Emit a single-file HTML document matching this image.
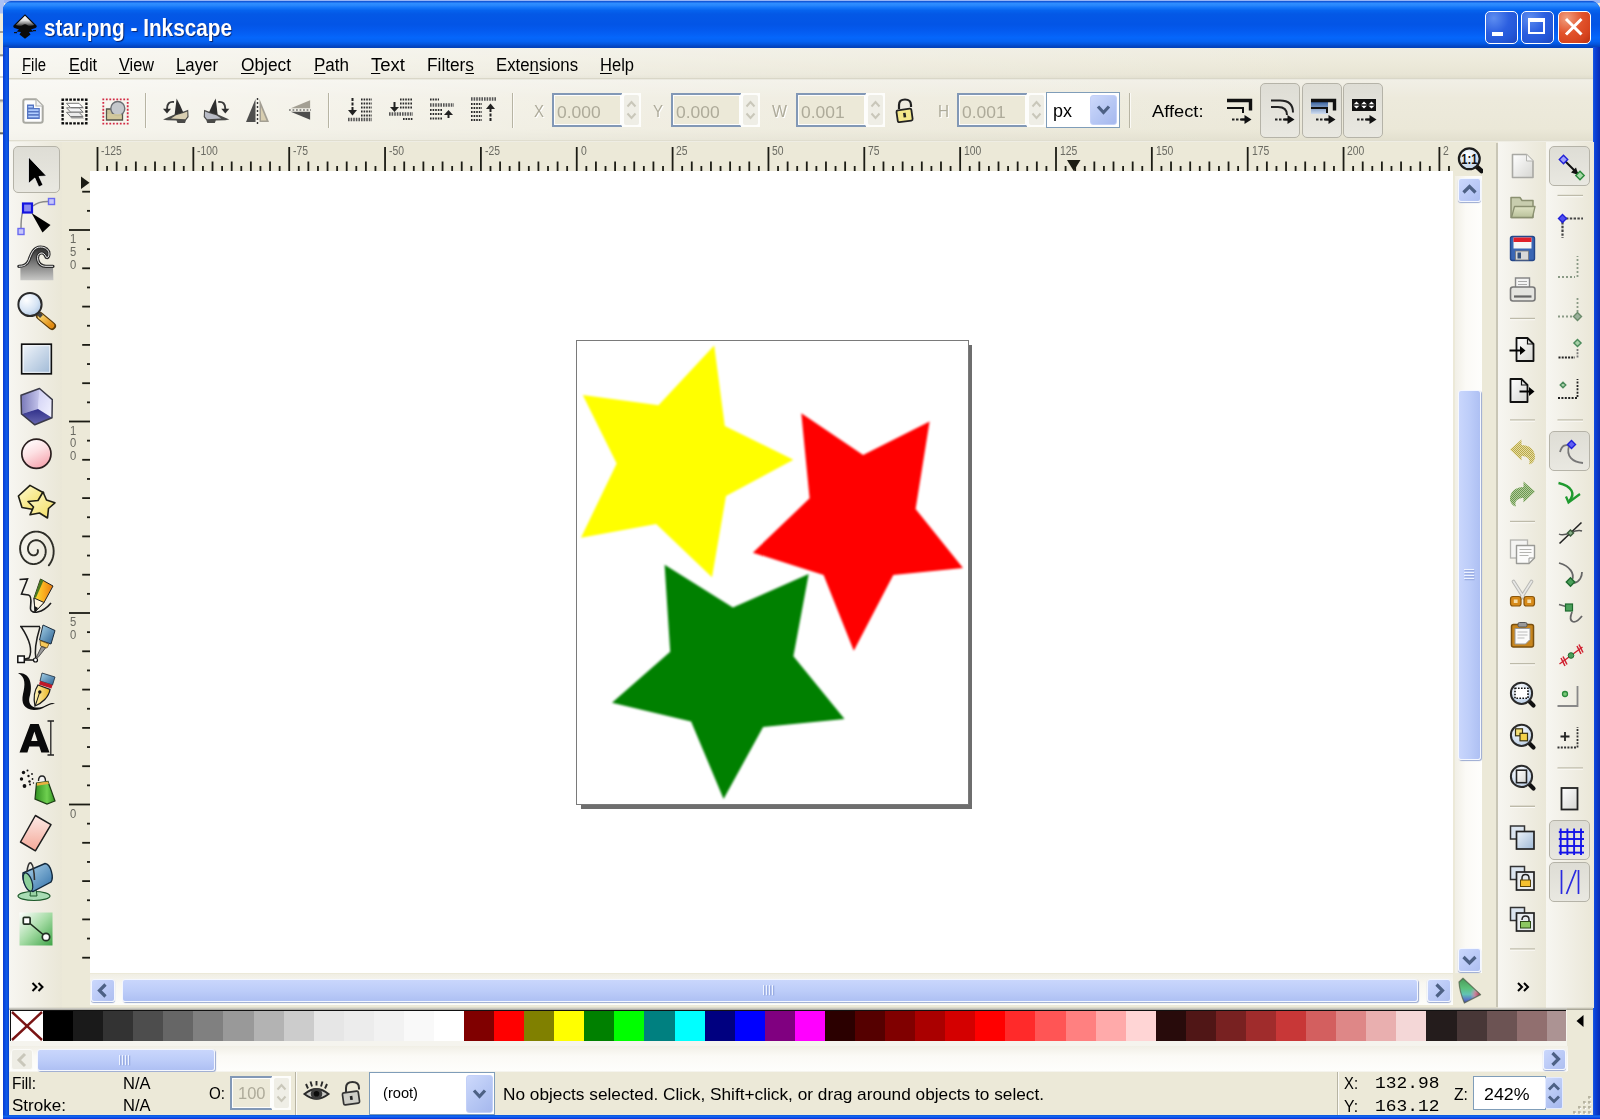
<!DOCTYPE html><html><head><meta charset="utf-8"><title>star.png - Inkscape</title><style>
*{box-sizing:border-box;margin:0;padding:0}
html,body{width:1600px;height:1119px;overflow:hidden;background:#ece9d8}
body{position:relative;font-family:"Liberation Sans","DejaVu Sans",sans-serif;font-size:16px;color:#000}
.a{position:absolute}
.t{position:absolute;white-space:nowrap;line-height:1}
svg{position:absolute;overflow:visible}
u{text-decoration:underline;text-underline-offset:2px;text-decoration-thickness:1px}
.sb{position:absolute;border:1px solid #fff;border-radius:3px;box-shadow:0 0 0 1px #b4c4ee inset}
.sep{position:absolute;background:#b9b6a5}
.spin{position:absolute;background:#fff;border:1px solid #9fb5d2}
.btn{position:absolute;border:1px solid #b5b3a8;border-radius:5px;background:linear-gradient(#deddd5,#e9e8e1)}
</style></head><body>
<div class="a" style="left:0;top:0;width:1600px;height:3px;background:#98b4f4"></div>
<div class="a" style="left:0;top:0;width:4px;height:1119px;background:linear-gradient(#a9c1f6 0,#a9c1f6 13px,#efecdc 14px,#efecdc 31px,#555 32px,#efecdc 33px,#efecdc 54px,#666 55px,#fff 57px,#fff 76px,#aaa 77px,#fff 78px,#fff 99px,#888 100px,#efecdc 103px,#efecdc 132px,#333 133px,#fff 135px,#fff 100%)"></div>
<div class="a" style="left:3px;top:1px;width:1597px;height:1118px;border-radius:9px 9px 0 0;background:#0a3fd6"></div>
<div class="a" style="left:3px;top:1px;width:1597px;height:47px;border-radius:9px 9px 0 0;background:linear-gradient(to bottom,#0a4bd0 0%,#2f8dff 5%,#2a88fd 9%,#1475f8 14%,#0663ee 20%,#0458e6 28%,#0355e6 50%,#045bf0 64%,#0566fb 78%,#0562f2 86%,#0454dc 92%,#0347c4 96%,#0340b6 100%)"></div>
<div class="a" style="left:3px;top:47px;width:6px;height:1072px;background:linear-gradient(to right,#0a3cd0 0,#0a4ae0 30%,#0f5ae8 60%,#0a4cdc 85%,#0840c4 100%)"></div>
<div class="a" style="left:1593px;top:47px;width:7px;height:1079px;background:linear-gradient(to right,#1a5ae4 0,#0c44d8 25%,#0a3acc 55%,#072cb4 100%)"></div>
<div class="a" style="left:3px;top:1115px;width:1597px;height:4px;background:linear-gradient(#0855dd,#1266f0 40%,#0831d9)"></div>
<div class="a" style="left:9px;top:48px;width:1584px;height:1067px;background:#ece9d8"></div>
<svg style="left:12px;top:13px" width="26" height="27" viewBox="0 0 26 27">
<defs><linearGradient id="ig" x1="0" y1="0" x2="0" y2="1"><stop offset="0" stop-color="#fff"/><stop offset=".45" stop-color="#e0e0e0"/><stop offset=".8" stop-color="#777"/><stop offset="1" stop-color="#222"/></linearGradient></defs>
<path d="M13 1.2 L1.5 12.5 Q0.5 14 2.5 15 L7 16.5 L4.5 18.5 L9 19 L7.5 21.5 L13 25.8 L18.5 21.5 L17 19 L21.5 18.5 L19 16.5 L23.5 15 Q25.5 14 24.5 12.5 Z" fill="#0a0a0a"/>
<path d="M13 2.800 L3.800 12 Q8 14 10.500 12.200 Q13 10.300 15.500 12.200 Q18 14 22.200 12 Z" fill="url(#ig)"/>
<rect x="2" y="19" width="3" height="1.2" fill="#111"/><rect x="21" y="17" width="3" height="1.2" fill="#111"/>
</svg>
<div class="t" style="left:44.00px;top:16.73px;font-size:23.00px;color:#fff;font-weight:bold;transform:scaleX(0.9024);transform-origin:0 0;text-shadow:1px 1px 1px #0a246a;">star.png - Inkscape</div>
<div class="a" style="left:1485px;top:11px;width:33px;height:33px;border:1.5px solid #fff;border-radius:5px;background:radial-gradient(circle at 25% 20%,#5d8df0 0,#2c5fe0 45%,#2458d8 70%,#1c46c0 100%)"><div class="a" style="left:6px;top:20px;width:11px;height:4px;background:#fff"></div></div>
<div class="a" style="left:1521px;top:11px;width:33px;height:33px;border:1.5px solid #fff;border-radius:5px;background:radial-gradient(circle at 25% 20%,#5d8df0 0,#2c5fe0 45%,#2458d8 70%,#1c46c0 100%)"><div class="a" style="left:6px;top:6px;width:17px;height:16px;border:2px solid #fff;border-top-width:4px"></div></div>
<div class="a" style="left:1558px;top:11px;width:33px;height:33px;border:1.5px solid #fff;border-radius:5px;background:radial-gradient(circle at 25% 20%,#f0a080 0,#e2532c 45%,#d6431e 75%,#b8300f 100%)"><svg style="left:0;top:0" width="30" height="30" viewBox="0 0 30 30"><path d="M7 7 L22.5 22.5 M22.5 7 L7 22.5" stroke="#fff" stroke-width="3" fill="none"/></svg></div>
<div class="a" style="left:9px;top:48px;width:1584px;height:31px;background:linear-gradient(to right,rgba(255,255,255,.6) 0,rgba(255,255,255,.25) 40%,rgba(255,255,255,0) 85%),linear-gradient(#efede2 0,#edeadb 45%,#e8e5d5 85%,#dfdccb 100%)"></div>
<div class="a" style="left:9px;top:78px;width:1584px;height:2px;background:linear-gradient(#d0cdbb,#f4f3ec)"></div>
<div class="t" style="left:22.00px;top:55.76px;font-size:18.00px;color:#000;transform:scaleX(0.8275);transform-origin:0 0;"><u>F</u>ile</div>
<div class="t" style="left:69.00px;top:55.76px;font-size:18.00px;color:#000;transform:scaleX(0.9028);transform-origin:0 0;"><u>E</u>dit</div>
<div class="t" style="left:119.00px;top:55.76px;font-size:18.00px;color:#000;transform:scaleX(0.9047);transform-origin:0 0;"><u>V</u>iew</div>
<div class="t" style="left:176.00px;top:55.76px;font-size:18.00px;color:#000;transform:scaleX(0.9329);transform-origin:0 0;"><u>L</u>ayer</div>
<div class="t" style="left:241.00px;top:55.76px;font-size:18.00px;color:#000;transform:scaleX(0.9612);transform-origin:0 0;"><u>O</u>bject</div>
<div class="t" style="left:314.00px;top:55.76px;font-size:18.00px;color:#000;transform:scaleX(0.9453);transform-origin:0 0;"><u>P</u>ath</div>
<div class="t" style="left:371.00px;top:55.76px;font-size:18.00px;color:#000;transform:scaleX(1.0300);transform-origin:0 0;"><u>T</u>ext</div>
<div class="t" style="left:427.00px;top:55.76px;font-size:18.00px;color:#000;transform:scaleX(0.9593);transform-origin:0 0;">Filter<u>s</u></div>
<div class="t" style="left:496.00px;top:55.76px;font-size:18.00px;color:#000;transform:scaleX(0.9313);transform-origin:0 0;">Exte<u>n</u>sions</div>
<div class="t" style="left:600.00px;top:55.76px;font-size:18.00px;color:#000;transform:scaleX(0.9185);transform-origin:0 0;"><u>H</u>elp</div>
<div class="a" style="left:9px;top:80px;width:1584px;height:61px;background:linear-gradient(to right,rgba(255,255,255,.6) 0,rgba(255,255,255,.25) 40%,rgba(255,255,255,0) 85%),linear-gradient(#f1efe6 0,#edeadc 30%,#ebe8d8 80%,#e2dfce 100%)"></div>
<div class="a" style="left:9px;top:140px;width:1584px;height:2px;background:linear-gradient(#d8d5c4,#f6f5ee)"></div>
<svg style="left:22.0px;top:98.0px" width="22.0" height="26.0" viewBox="0 0 22 26"><path d="M3.500 1.300 h10.500 l6.700 6.700 v14.500 q0 2.200 -2.200 2.200 h-15 q-2.200 0 -2.200 -2.200 v-19 q0 -2.200 2.200 -2.200z" fill="#fdfdfd" stroke="#a9a9a2" stroke-width="2" stroke-linejoin="round"/>
<path d="M14 1.500 v6.500 h6.500" fill="#f4f4f4" stroke="#b8b8b2" stroke-width="1.200"/>
<path d="M5 6.600 h7 v3.400 h5.800 v11 h-12.800z" fill="#5575c2"/>
<g fill="#b4d0ff"><rect x="6.300" y="8" width="4.500" height="1.500"/><rect x="6.300" y="11.300" width="10.300" height="1.600"/><rect x="6.300" y="14.500" width="10.300" height="1.600"/><rect x="6.300" y="17.700" width="10.300" height="1.600"/></g></svg>
<svg style="left:61.0px;top:97.5px" width="27.0" height="27.0" viewBox="0 0 27 27"><path d="M0.500 1.600 H26.500 M25.400 0.500 V26.500 M26.500 25.400 H0.500 M1.600 26.500 V0.500" fill="none" stroke="#0c0c0c" stroke-width="2.300" stroke-dasharray="2.600 1.300"/><path d="M8 17.500 h12.500 l2.500 3 h-12.500z" fill="#9a9a9a"/><path d="M5.500 14.3 h12.500 l4 4.200 h-12.500z" fill="#ececec" stroke="#7a7a7a" stroke-width="1"/><path d="M8 12 h12.500 l2.500 3 h-12.500z" fill="#a8a8a8"/><path d="M5.500 9.8 h12.500 l4 4.200 h-12.500z" fill="#f4f4f4" stroke="#7a7a7a" stroke-width="1"/><path d="M8 7.500 h12.500 l2.500 3 h-12.500z" fill="#b4b4b4"/><path d="M5.500 5.3 h12.500 l4 4.200 h-12.500z" fill="#ffffff" stroke="#7a7a7a" stroke-width="1"/></svg>
<svg style="left:102.0px;top:97.5px" width="27.0" height="27.0" viewBox="0 0 27 27"><path d="M0.400 1.300 H26.600 M25.700 0.400 V26.600 M26.600 25.700 H0.400 M1.300 26.600 V0.400" fill="none" stroke="#d22a44" stroke-width="1.800" stroke-dasharray="1.800 1.685"/>
<path d="M4.500 11 h6 v4 h10 v7 h-16z" fill="#c9c29a" stroke="#55554a" stroke-width="1.300"/><circle cx="15.800" cy="10.500" r="7" fill="#c4c8cc" stroke="#6a6e72" stroke-width="1.400"/><path d="M5.500 16 h14 v5 h-14z" fill="#d3ca9c" opacity=".9"/></svg>
<div class="sep" style="left:145px;top:93px;width:2px;height:35px;background:linear-gradient(to right,#b7b4a3 50%,#fbfaf6 50%)"></div>
<svg style="left:0;top:0" width="1600" height="1119" viewBox="0 0 1600 1119"><polygon points="163.0,119.6 175.0,114.3 183.0,111.8 188.2,109.8 188.6,117.0 186.0,120.3 185.0,123.0 177.5,123.0 176.5,120.6 167.0,120.2" fill="#4a4a48"/><polygon points="171.0,118.6 176.0,115.3 183.5,113.0 187.3,111.5 187.4,116.6 185.3,119.2" fill="#d9cfb2"/><polygon points="176.6,98.6 174.6,115.0 183.2,112.2 180.0,105.0" fill="#2e2e2e"/><path d="M174.0 102 Q167.0 101 167.0 109" fill="none" stroke="#3a3a3a" stroke-width="1.900"/><polygon points="163.0,108.8 171.0,108.8 167.0,113.6" fill="#2e2e2e"/><polygon points="229.3,119.6 217.3,114.3 209.3,111.8 204.1,109.8 203.7,117.0 206.3,120.3 207.3,123.0 214.8,123.0 215.8,120.6 225.3,120.2" fill="#4a4a48"/><polygon points="221.3,118.6 216.3,115.3 208.8,113.0 205.0,111.5 204.9,116.6 207.0,119.2" fill="#b9bcc6"/><polygon points="215.7,98.6 217.7,115.0 209.1,112.2 212.3,105.0" fill="#2e2e2e"/><path d="M218.3 102 Q225.3 101 225.3 109" fill="none" stroke="#3a3a3a" stroke-width="1.900"/><polygon points="229.3,108.8 221.3,108.8 225.3,113.6" fill="#2e2e2e"/></svg>
<svg style="left:245.0px;top:98.0px" width="25.0" height="26.0" viewBox="0 0 25 26"><path d="M10.500 1 L10.500 24 L1 24 Z" fill="#3c3c3c" opacity=".9"/><path d="M14.500 1 L14.500 24 L24 24 Z" fill="#9a968a" opacity=".9"/><path d="M16 9 L16 22.500 L21.500 22.500z" fill="#d8ceb0"/><path d="M12.500 0 v26" stroke="#333" stroke-width="1.4" stroke-dasharray="2 2"/></svg>
<svg style="left:288.5px;top:98.0px" width="22.0" height="24.0" viewBox="0 0 25 26"><path d="M24 2 L24 11 L2 11 Z" fill="#9a968a" opacity=".9"/><path d="M24 24 L24 15 L2 15 Z" fill="#3c3c3c" opacity=".9"/><path d="M0 13 h25" stroke="#333" stroke-width="1.4" stroke-dasharray="2 2"/></svg>
<div class="sep" style="left:328px;top:93px;width:2px;height:35px;background:linear-gradient(to right,#b7b4a3 50%,#fbfaf6 50%)"></div>
<svg style="left:347.0px;top:97.0px" width="26.0" height="26.0" viewBox="0 0 26 26"><path d="M5.500 1 v14" stroke="#222" stroke-width="2" stroke-dasharray="3 1.500"/><path d="M1 13 h9 l-4.500 5.500z" fill="#222"/><path d="M14 2.5 h11" stroke="#2a2a2a" stroke-width="2.2" stroke-dasharray="1.6 1"/><path d="M14 6.5 h11" stroke="#2a2a2a" stroke-width="2.2" stroke-dasharray="1.6 1"/><path d="M14 10.5 h11" stroke="#2a2a2a" stroke-width="2.2" stroke-dasharray="1.6 1"/><path d="M14 14.5 h11" stroke="#2a2a2a" stroke-width="2.2" stroke-dasharray="1.6 1"/><path d="M14 18.5 h11" stroke="#2a2a2a" stroke-width="2.2" stroke-dasharray="1.6 1"/><path d="M1 22.500 h24" stroke="#555" stroke-width="3.6" stroke-dasharray="1.600 1"/></svg>
<svg style="left:388.0px;top:97.0px" width="26.0" height="26.0" viewBox="0 0 26 26"><path d="M6.500 5 v6" stroke="#222" stroke-width="2" /><path d="M2 10 h9 l-4.500 5z" fill="#222"/><path d="M12 2.5 h13" stroke="#2a2a2a" stroke-width="2.2" stroke-dasharray="1.6 1"/><path d="M12 6.5 h13" stroke="#2a2a2a" stroke-width="2.2" stroke-dasharray="1.6 1"/><path d="M12 10.5 h13" stroke="#2a2a2a" stroke-width="2.2" stroke-dasharray="1.6 1"/><path d="M1 17 h24" stroke="#555" stroke-width="3.6" stroke-dasharray="1.600 1"/><path d="M15 22 h10" stroke="#2a2a2a" stroke-width="2.2" stroke-dasharray="1.6 1"/></svg>
<svg style="left:429.0px;top:97.0px" width="26.0" height="26.0" viewBox="0 0 26 26"><path d="M1 2.5 h9" stroke="#2a2a2a" stroke-width="2.2" stroke-dasharray="1.6 1"/><path d="M1 8 h24" stroke="#555" stroke-width="3.6" stroke-dasharray="1.600 1"/><path d="M1 13 h12" stroke="#2a2a2a" stroke-width="2.2" stroke-dasharray="1.6 1"/><path d="M1 17 h12" stroke="#2a2a2a" stroke-width="2.2" stroke-dasharray="1.6 1"/><path d="M1 21.5 h12" stroke="#2a2a2a" stroke-width="2.2" stroke-dasharray="1.6 1"/><path d="M19.500 21 v-4" stroke="#222" stroke-width="2"/><path d="M15 18 h9 l-4.500 -5z" fill="#222"/></svg>
<svg style="left:470.0px;top:96.0px" width="26.0" height="26.0" viewBox="0 0 26 26"><path d="M1 3 h25" stroke="#555" stroke-width="3.600" stroke-dasharray="1.600 1"/><path d="M1 8 h11" stroke="#2a2a2a" stroke-width="2.2" stroke-dasharray="1.6 1"/><path d="M1 12 h11" stroke="#2a2a2a" stroke-width="2.2" stroke-dasharray="1.6 1"/><path d="M1 16 h11" stroke="#2a2a2a" stroke-width="2.2" stroke-dasharray="1.6 1"/><path d="M1 20 h11" stroke="#2a2a2a" stroke-width="2.2" stroke-dasharray="1.6 1"/><path d="M1 24 h11" stroke="#2a2a2a" stroke-width="2.2" stroke-dasharray="1.6 1"/><path d="M20.500 25 v-14" stroke="#222" stroke-width="2" stroke-dasharray="3 1.500"/><path d="M16 13 h9 l-4.500 -5.500z" fill="#222"/></svg>
<div class="sep" style="left:512px;top:93px;width:2px;height:35px;background:linear-gradient(to right,#b7b4a3 50%,#fbfaf6 50%)"></div>
<div class="t" style="left:534.00px;top:103.33px;font-size:16.50px;color:#aeab9a;transform:scaleX(0.9086);transform-origin:0 0;text-shadow:1px 1px 0 #fff;">X</div>
<div class="a" style="left:552px;top:93px;width:71px;height:34px;border:2px solid #8298b6;border-right-color:#fdfdfc;background:#ece9d8;box-shadow:inset 0 0 0 1px #fdfdfc"></div><div class="t" style="left:557.00px;top:103.59px;font-size:16.20px;color:#aeab9a;transform:scaleX(1.0781);transform-origin:0 0;">0.000</div>
<div class="a" style="left:622px;top:93px;width:19px;height:34px;background:#fdfdfb"></div><div class="a" style="left:624px;top:95px;width:15px;height:30px;background:#efeee6;border-radius:2px"></div><svg style="left:624.0px;top:95.0px" width="15.0" height="30.0" viewBox="0 0 15 30"><path d="M3.5 11.5 l4 -4.5 l4 4.5 M3.5 18.5 l4 4.5 l4 -4.5" fill="none" stroke="#c9c7ba" stroke-width="2"/></svg>
<div class="t" style="left:653.00px;top:103.33px;font-size:16.50px;color:#aeab9a;transform:scaleX(0.9086);transform-origin:0 0;text-shadow:1px 1px 0 #fff;">Y</div>
<div class="a" style="left:671px;top:93px;width:71px;height:34px;border:2px solid #8298b6;border-right-color:#fdfdfc;background:#ece9d8;box-shadow:inset 0 0 0 1px #fdfdfc"></div><div class="t" style="left:676.00px;top:103.59px;font-size:16.20px;color:#aeab9a;transform:scaleX(1.0781);transform-origin:0 0;">0.000</div>
<div class="a" style="left:741px;top:93px;width:19px;height:34px;background:#fdfdfb"></div><div class="a" style="left:743px;top:95px;width:15px;height:30px;background:#efeee6;border-radius:2px"></div><svg style="left:743.0px;top:95.0px" width="15.0" height="30.0" viewBox="0 0 15 30"><path d="M3.5 11.5 l4 -4.5 l4 4.5 M3.5 18.5 l4 4.5 l4 -4.5" fill="none" stroke="#c9c7ba" stroke-width="2"/></svg>
<div class="t" style="left:772.00px;top:103.33px;font-size:16.50px;color:#aeab9a;transform:scaleX(0.9631);transform-origin:0 0;text-shadow:1px 1px 0 #fff;">W</div>
<div class="a" style="left:796px;top:93px;width:71px;height:34px;border:2px solid #8298b6;border-right-color:#fdfdfc;background:#ece9d8;box-shadow:inset 0 0 0 1px #fdfdfc"></div><div class="t" style="left:801.00px;top:103.59px;font-size:16.20px;color:#aeab9a;transform:scaleX(1.0781);transform-origin:0 0;">0.001</div>
<div class="a" style="left:866px;top:93px;width:19px;height:34px;background:#fdfdfb"></div><div class="a" style="left:868px;top:95px;width:15px;height:30px;background:#efeee6;border-radius:2px"></div><svg style="left:868.0px;top:95.0px" width="15.0" height="30.0" viewBox="0 0 15 30"><path d="M3.5 11.5 l4 -4.5 l4 4.5 M3.5 18.5 l4 4.5 l4 -4.5" fill="none" stroke="#c9c7ba" stroke-width="2"/></svg>
<svg style="left:894.0px;top:98.0px" width="22.0" height="26.0" viewBox="0 0 22 26"><path d="M5 11 v-4 q0 -5.500 6 -5.500 q6 0 6 5.500 v2" fill="none" stroke="#222" stroke-width="2.200"/>
<rect x="3" y="11.500" width="15" height="12" rx="1.500" transform="rotate(-8 10 17)" fill="#f4e88a" stroke="#222" stroke-width="1.800"/><rect x="9.300" y="15" width="2.600" height="4.500" fill="#222" transform="rotate(-8 10 17)"/></svg>
<div class="t" style="left:938.00px;top:103.33px;font-size:16.50px;color:#aeab9a;transform:scaleX(0.9231);transform-origin:0 0;text-shadow:1px 1px 0 #fff;">H</div>
<div class="a" style="left:957px;top:93px;width:71px;height:34px;border:2px solid #8298b6;border-right-color:#fdfdfc;background:#ece9d8;box-shadow:inset 0 0 0 1px #fdfdfc"></div><div class="t" style="left:962.00px;top:103.59px;font-size:16.20px;color:#aeab9a;transform:scaleX(1.0781);transform-origin:0 0;">0.001</div>
<div class="a" style="left:1027px;top:93px;width:19px;height:34px;background:#fdfdfb"></div><div class="a" style="left:1029px;top:95px;width:15px;height:30px;background:#efeee6;border-radius:2px"></div><svg style="left:1029.0px;top:95.0px" width="15.0" height="30.0" viewBox="0 0 15 30"><path d="M3.5 11.5 l4 -4.5 l4 4.5 M3.5 18.5 l4 4.5 l4 -4.5" fill="none" stroke="#c9c7ba" stroke-width="2"/></svg>
<div class="a" style="left:1046px;top:92px;width:74px;height:36px;background:#fff;border:1.5px solid #7f9db9"></div>
<div class="a" style="left:1090px;top:95px;width:27px;height:30px;border-radius:3px;background:linear-gradient(135deg,#cdd9fb,#b4c5f3 60%,#a6b8ee);border:1px solid #c3d0f8"></div>
<svg style="left:1090.0px;top:95.0px" width="27.0" height="30.0" viewBox="0 0 27 30"><path d="M8 11.500 l5.500 6 l5.500 -6" fill="none" stroke="#4d6185" stroke-width="3.200"/></svg>
<div class="t" style="left:1053.00px;top:102.26px;font-size:18.00px;color:#000;transform:scaleX(0.9995);transform-origin:0 0;">px</div>
<div class="sep" style="left:1129px;top:93px;width:2px;height:35px;background:linear-gradient(to right,#b7b4a3 50%,#fbfaf6 50%)"></div>
<div class="t" style="left:1151.70px;top:103.03px;font-size:16.50px;color:#000;transform:scaleX(1.1083);transform-origin:0 0;">Affect:</div>
<div class="btn" style="left:1260px;top:83px;width:40px;height:55px"></div>
<div class="btn" style="left:1302px;top:83px;width:40px;height:55px"></div>
<div class="btn" style="left:1343px;top:83px;width:40px;height:55px"></div>
<svg style="left:1226.0px;top:98.0px" width="26.0" height="26.0" viewBox="0 0 26 26"><path d="M1 2.500 h23.500 v10" fill="none" stroke="#111" stroke-width="3.400"/><path d="M1 10 h16 v5" fill="none" stroke="#111" stroke-width="2"/><path d="M6 21.500 h10" stroke="#222" stroke-width="2" stroke-dasharray="2.500 1.500"/><path d="M15.500 21.500 h5" stroke="#111" stroke-width="2.400"/><path d="M18.500 17 l7 4.500 l-7 4.500z" fill="#111"/></svg>
<svg style="left:1269.0px;top:98.0px" width="26.0" height="26.0" viewBox="0 0 26 26"><path d="M2 2.500 h9 q13 0 13 12" fill="none" stroke="#222" stroke-width="2"/><path d="M2 9 h7 q9 0 9 8" fill="none" stroke="#222" stroke-width="2"/><path d="M6 21.500 h10" stroke="#222" stroke-width="2" stroke-dasharray="2.500 1.500"/><path d="M15.500 21.500 h5" stroke="#111" stroke-width="2.400"/><path d="M18.500 17 l7 4.500 l-7 4.500z" fill="#111"/></svg>
<svg style="left:1310.0px;top:98.0px" width="26.0" height="26.0" viewBox="0 0 26 26"><defs><linearGradient id="afg" x1="0" y1="0" x2="0" y2="1"><stop offset="0" stop-color="#3b64a0"/><stop offset="1" stop-color="#cfdcef"/></linearGradient></defs><rect x="1" y="4" width="17" height="12" fill="url(#afg)"/><path d="M1 2.500 h23.500 v10" fill="none" stroke="#111" stroke-width="3.400"/><path d="M1 10 h16 v5" fill="none" stroke="#111" stroke-width="2"/><path d="M6 21.500 h10" stroke="#222" stroke-width="2" stroke-dasharray="2.500 1.500"/><path d="M15.500 21.500 h5" stroke="#111" stroke-width="2.400"/><path d="M18.500 17 l7 4.500 l-7 4.500z" fill="#111"/></svg>
<svg style="left:1351.0px;top:98.0px" width="26.0" height="26.0" viewBox="0 0 26 26"><rect x="1" y="1" width="24" height="12" fill="#111"/><path d="M2 7 l3.500 -3.500 l3.500 3.500 l-3.500 3.500z M9.500 7 l3.500 -3.500 l3.500 3.500 l-3.500 3.500z M17 7 l3.500 -3.500 l3.500 3.500 l-3.500 3.500z" fill="#fff"/><path d="M1 7 h24" stroke="#111" stroke-width="1.500"/><path d="M6 21.500 h10" stroke="#222" stroke-width="2" stroke-dasharray="2.500 1.500"/><path d="M15.500 21.500 h5" stroke="#111" stroke-width="2.400"/><path d="M18.500 17 l7 4.500 l-7 4.500z" fill="#111"/></svg>
<div class="a" style="left:9px;top:142px;width:53px;height:866px;background:linear-gradient(to right,#f7f6f1 0,#f1efe6 45%,#eae7d7 100%)"></div>
<div class="btn" style="left:13px;top:146px;width:47px;height:47px"></div>
<svg style="left:0;top:0" width="1600" height="1119" viewBox="0 0 1600 1119"><defs>
<linearGradient id="g_tw" x1="0" y1="0" x2="0" y2="1"><stop offset="0" stop-color="#2a2a2a"/><stop offset=".5" stop-color="#7c7c7c"/><stop offset="1" stop-color="#c8c8c6"/></linearGradient>
<radialGradient id="g_lens" cx=".35" cy=".3" r=".8"><stop offset="0" stop-color="#fff"/><stop offset=".6" stop-color="#d6e4f4"/><stop offset="1" stop-color="#a9c3e2"/></radialGradient>
<linearGradient id="g_hand" x1="0" y1="0" x2="1" y2="1"><stop offset="0" stop-color="#f9d26a"/><stop offset="1" stop-color="#e08a10"/></linearGradient>
<linearGradient id="g_rect" x1="0" y1="0" x2="1" y2="1"><stop offset="0" stop-color="#f2f6fb"/><stop offset="1" stop-color="#9fb9d6"/></linearGradient>
<linearGradient id="g_bxl" x1="0" y1="0" x2="1" y2="0"><stop offset="0" stop-color="#7878b8"/><stop offset="1" stop-color="#c6c6ec"/></linearGradient>
<linearGradient id="g_bxr" x1="0" y1="0" x2="1" y2="1"><stop offset="0" stop-color="#cfcff4"/><stop offset="1" stop-color="#f4f4ff"/></linearGradient>
<linearGradient id="g_bxb" x1="0" y1="0" x2="0" y2="1"><stop offset="0" stop-color="#30308a"/><stop offset="1" stop-color="#6868b0"/></linearGradient>
<linearGradient id="g_ell" x1=".2" y1="0" x2=".7" y2="1"><stop offset="0" stop-color="#fff"/><stop offset=".45" stop-color="#fde0e3"/><stop offset="1" stop-color="#f6a3ad"/></linearGradient>
<linearGradient id="g_star" x1="0" y1="0" x2="1" y2="1"><stop offset="0" stop-color="#fffbd0"/><stop offset="1" stop-color="#f2dc5a"/></linearGradient>
<linearGradient id="g_pcl" x1="0" y1="0" x2="1" y2="0"><stop offset="0" stop-color="#f8e23a"/><stop offset=".5" stop-color="#fbb020"/><stop offset="1" stop-color="#e87a10"/></linearGradient>
<linearGradient id="g_pen" x1="0" y1="0" x2="1" y2="1"><stop offset="0" stop-color="#a8d4ea"/><stop offset="1" stop-color="#2a5f90"/></linearGradient>
<linearGradient id="g_nib" x1="0" y1="0" x2="1" y2="0"><stop offset="0" stop-color="#fff6c0"/><stop offset="1" stop-color="#e9b520"/></linearGradient>
<linearGradient id="g_spr" x1="0" y1="0" x2="1" y2="0"><stop offset="0" stop-color="#2f8f1f"/><stop offset=".6" stop-color="#6fd050"/><stop offset="1" stop-color="#2f8f1f"/></linearGradient>
<linearGradient id="g_era" x1="0" y1="0" x2="0" y2="1"><stop offset="0" stop-color="#fdeae6"/><stop offset="1" stop-color="#f4a898"/></linearGradient>
<linearGradient id="g_bkt" x1="0" y1="0" x2="1" y2="1"><stop offset="0" stop-color="#b4d8ee"/><stop offset="1" stop-color="#2f6fa8"/></linearGradient>
<linearGradient id="g_grd" x1="0" y1="0" x2="1" y2="1"><stop offset="0" stop-color="#ffffff"/><stop offset=".5" stop-color="#a4dba4"/><stop offset="1" stop-color="#3fa447"/></linearGradient>
</defs><path d="M28.500 157 L28.500 183.500 L34.800 178 L38.800 187 L43 185 L39 176.500 L46.500 176 Z" fill="#000" stroke="#fff" stroke-width="1" stroke-opacity=".7"/><path d="M21 229 Q21 207 27 207 M33 206 Q38 201.500 48 201.500" fill="none" stroke="#8a8a8a" stroke-width="1.500"/><rect x="23" y="203.500" width="9" height="9" fill="#8a8af0" stroke="#1414e0" stroke-width="2.200"/><rect x="48.500" y="198.500" width="6" height="6" fill="#c6c6fa" stroke="#6a6af0" stroke-width="1.400"/><rect x="18" y="228.500" width="6" height="6" fill="#c6c6fa" stroke="#6a6af0" stroke-width="1.400"/><path d="M31.500 213 L50.500 225 L42.500 232.500 Z" fill="#000"/><path d="M18.800 266.300 C24 266.300 27 265 29 260 C31.500 253 34 247 40.500 247 C45.500 247 49 250 49 254 C49 257 47.500 258 46.300 257.300 C45 254 43 252.800 41 253 C38 253.500 37 257 37.800 260 C39 264.500 42 266.300 46 266.300 L53 266.300 L53.400 280.200 L20.400 280.200 L20.400 267 Z" fill="url(#g_tw)"/><path d="M18.800 266.300 C24 266.300 27 265 29 260 C31.500 253 34 247 40.500 247 C45.500 247 49 250 49 254 C49 257 47.500 258 46.300 257.300 C45 254 43 252.800 41 253 C38 253.500 37 257 37.800 260 C39 264.500 42 266.300 46 266.300 L53 266.300" fill="none" stroke="#2c2c2c" stroke-width="3.200" stroke-linecap="round"/><path d="M18.800 266.300 C24 266.300 27 265 29 260 C31.500 253 34 247 40.500 247 C45.500 247 49 250 49 254 C49 257 47.500 258 46.300 257.300 C45 254 43 252.800 41 253 C38 253.500 37 257 37.800 260 C39 264.500 42 266.300 46 266.300 L53 266.300" fill="none" stroke="#f0f0f0" stroke-width="1"/><path d="M40 316 L52 326" stroke="#5a3a08" stroke-width="8" stroke-linecap="round"/><path d="M40.500 316.500 L51.500 325.500" stroke="url(#g_hand)" stroke-width="5.600" stroke-linecap="round"/><path d="M37.500 312.500 L41.500 316.500" stroke="#444" stroke-width="4"/><circle cx="30" cy="304.500" r="11.600" fill="url(#g_lens)" stroke="#2a2a2a" stroke-width="2"/><rect x="21.700" y="344.200" width="29.600" height="29.600" fill="url(#g_rect)" stroke="#111" stroke-width="1.700"/><rect x="23.200" y="345.700" width="26.600" height="26.600" fill="none" stroke="#fff" stroke-width="1" opacity=".8"/><path d="M39.500 388.500 L52.300 399.600 L52 417.700 L34.800 424.800 L21.500 414 L21 395.300 Z" fill="#d8d8f6"/><path d="M21 395.300 L39.500 388.500 L38 409 L21.500 414 Z" fill="url(#g_bxl)"/><path d="M39.500 388.500 L52.300 399.600 L52 417.700 L38 409 Z" fill="url(#g_bxr)"/><path d="M38 409 L52 417.700 L34.800 424.800 L21.500 414 Z" fill="url(#g_bxb)"/><path d="M39.500 388.500 L52.300 399.600 L52 417.700 L34.800 424.800 L21.500 414 L21 395.300 Z" fill="none" stroke="#3a3a48" stroke-width="1.500" stroke-linejoin="round"/><circle cx="36.400" cy="453.800" r="14.600" fill="url(#g_ell)" stroke="#2a1e1e" stroke-width="1.700"/><path d="M30 485.400 L43.500 492.800 L33.400 509.500 L22 507.500 L18.400 496 Z" fill="url(#g_star)" stroke="#1e1e14" stroke-width="1.600" stroke-linejoin="round"/><path d="M43 492 L46.500 500 L54.900 502.800 L48.500 508.500 L47.500 518 L39.500 513 L30 514.800 L33.500 507 L28 501.500 L38 500.500 Z" fill="url(#g_star)" stroke="#1e1e14" stroke-width="1.600" stroke-linejoin="round"/><path d="M37.7 550.0 L37.8 550.2 L37.8 550.3 L37.9 550.5 L37.9 550.7 L37.9 550.9 L37.9 551.1 L37.9 551.3 L37.9 551.5 L37.9 551.7 L37.9 551.9 L37.9 552.1 L37.8 552.3 L37.7 552.5 L37.7 552.7 L37.6 553.0 L37.5 553.2 L37.4 553.4 L37.2 553.6 L37.1 553.7 L37.0 553.9 L36.8 554.1 L36.6 554.3 L36.4 554.4 L36.3 554.6 L36.1 554.7 L35.8 554.9 L35.6 555.0 L35.4 555.1 L35.1 555.2 L34.9 555.3 L34.6 555.3 L34.4 555.4 L34.1 555.4 L33.8 555.4 L33.6 555.4 L33.3 555.4 L33.0 555.4 L32.7 555.3 L32.5 555.3 L32.2 555.2 L31.9 555.1 L31.6 555.0 L31.3 554.8 L31.1 554.7 L30.8 554.5 L30.6 554.3 L30.3 554.1 L30.1 553.9 L29.8 553.6 L29.6 553.4 L29.4 553.1 L29.2 552.8 L29.0 552.5 L28.8 552.2 L28.7 551.8 L28.5 551.5 L28.4 551.1 L28.3 550.8 L28.2 550.4 L28.1 550.0 L28.1 549.6 L28.0 549.2 L28.0 548.8 L28.0 548.4 L28.0 548.0 L28.1 547.6 L28.1 547.1 L28.2 546.7 L28.3 546.3 L28.5 545.9 L28.6 545.5 L28.8 545.1 L29.0 544.7 L29.2 544.3 L29.4 544.0 L29.7 543.6 L29.9 543.2 L30.2 542.9 L30.5 542.6 L30.8 542.3 L31.2 542.0 L31.5 541.7 L31.9 541.5 L32.3 541.2 L32.7 541.0 L33.1 540.9 L33.6 540.7 L34.0 540.6 L34.4 540.4 L34.9 540.4 L35.4 540.3 L35.8 540.3 L36.3 540.3 L36.8 540.3 L37.3 540.3 L37.7 540.4 L38.2 540.5 L38.7 540.7 L39.2 540.8 L39.6 541.0 L40.1 541.2 L40.5 541.5 L41.0 541.8 L41.4 542.1 L41.8 542.4 L42.2 542.8 L42.6 543.2 L43.0 543.6 L43.3 544.0 L43.6 544.4 L44.0 544.9 L44.2 545.4 L44.5 545.9 L44.8 546.5 L45.0 547.0 L45.2 547.6 L45.3 548.2 L45.5 548.8 L45.6 549.4 L45.7 550.0 L45.7 550.6 L45.7 551.3 L45.7 551.9 L45.7 552.5 L45.6 553.2 L45.5 553.8 L45.4 554.4 L45.2 555.0 L45.0 555.7 L44.8 556.3 L44.5 556.9 L44.2 557.5 L43.9 558.0 L43.6 558.6 L43.2 559.1 L42.8 559.7 L42.4 560.2 L41.9 560.6 L41.4 561.1 L40.9 561.5 L40.4 561.9 L39.9 562.3 L39.3 562.6 L38.7 562.9 L38.1 563.2 L37.5 563.4 L36.9 563.6 L36.2 563.8 L35.6 563.9 L34.9 564.0 L34.2 564.1 L33.6 564.1 L32.9 564.1 L32.2 564.0 L31.5 563.9 L30.8 563.7 L30.2 563.6 L29.5 563.3 L28.8 563.1 L28.2 562.8 L27.6 562.4 L26.9 562.1 L26.3 561.6 L25.8 561.2 L25.2 560.7 L24.6 560.2 L24.1 559.6 L23.6 559.0 L23.2 558.4 L22.7 557.7 L22.3 557.1 L21.9 556.4 L21.6 555.6 L21.3 554.9 L21.0 554.1 L20.7 553.3 L20.5 552.5 L20.4 551.7 L20.3 550.8 L20.2 550.0 L20.1 549.1 L20.1 548.3 L20.2 547.4 L20.2 546.6 L20.3 545.7 L20.5 544.9 L20.7 544.0 L21.0 543.2 L21.2 542.3 L21.6 541.5 L21.9 540.7 L22.3 540.0 L22.8 539.2 L23.3 538.5 L23.8 537.8 L24.3 537.1 L24.9 536.4 L25.5 535.8 L26.2 535.2 L26.9 534.7 L27.6 534.2 L28.3 533.7 L29.1 533.3 L29.9 532.9 L30.7 532.6 L31.5 532.3 L32.3 532.0 L33.2 531.9 L34.0 531.7 L34.9 531.6 L35.8 531.6 L36.7 531.6 L37.5 531.6 L38.4 531.7 L39.3 531.9 L40.2 532.1 L41.1 532.3 L41.9 532.7 L42.8 533.0 L43.6 533.4 L44.4 533.9 L45.2 534.4 L46.0 535.0 L46.7 535.6 L47.4 536.2 L48.1 536.9 L48.8 537.6 L49.4 538.4 L50.0 539.2 L50.5 540.1 L51.0 541.0 L51.5 541.9 L51.9 542.8 L52.3 543.8 L52.7 544.8 L52.9 545.8 L53.2 546.8 L53.4 547.9 L53.5 548.9 L53.6 550.0 L53.7 551.1 L53.6 552.2 L53.6 553.3 L53.5 554.3 L53.3 555.4 L53.1 556.5 L52.8 557.6 L52.5 558.6 L52.1 559.6 L51.7 560.7 L51.2 561.6 L50.7 562.6 L50.1 563.6 L49.5 564.5 L48.8 565.3" fill="none" stroke="#2e2e28" stroke-width="1.900" stroke-linecap="round"/><path d="M19.500 579.500 L27.500 579 L21.500 594 L28.500 595 C33 596 30 606 30.500 609 C31 614 42 614 51 603" fill="none" stroke="#1c1c1c" stroke-width="1.600"/><path d="M40.500 579 L53 586 L44 602.500 L35 612 L34 598 Z" fill="url(#g_pcl)" stroke="#222" stroke-width="1"/><path d="M34 598 L44 602.500 L35 612 Z" fill="#fff6e0" stroke="#222" stroke-width="1"/><path d="M34.500 606 L38 608 L35 612 Z" fill="#111"/><path d="M40.500 579 L43.500 580.500 L36 597.500 L34 598 Z" fill="#4a7a20"/><path d="M20 626.500 L40 626.500 M21 626.500 C30 640 33 650 29 658 L23 659.500 M36 659.500 C34 650 36 640 40 627" fill="none" stroke="#1c1c1c" stroke-width="1.500"/><rect x="17.800" y="656" width="6.500" height="6.500" fill="#fff" stroke="#111" stroke-width="1.500"/><path d="M24.500 660 H34" stroke="#111" stroke-width="1.500"/><circle cx="35.500" cy="660" r="2" fill="#fff" stroke="#111" stroke-width="1.200"/><path d="M43 625 L55 630.500 L51 644 L39.500 640 Z" fill="url(#g_pen)" stroke="#1a2a3a" stroke-width="1"/><path d="M40 640.500 L49 644 L47 648 L40.500 646 Z" fill="#f6c95a" stroke="#6a4a10" stroke-width=".8"/><path d="M41.500 646.500 L45.500 648 L38 657.500 L36.500 657 Z" fill="#999" stroke="#333" stroke-width=".8"/><path d="M18 673 C33 672 32 690 29.500 697 C28 703 31 707 36 707.500 C46 708 50 700 55 704 C48 703 44 710 34 710 C24 709.500 21 703 23 694 C25 685 26 677 18 673 Z" fill="#0c0c0c"/><path d="M42 673 L55 677 L52.500 685 L40 681 Z" fill="url(#g_pen)" stroke="#1a2a3a" stroke-width=".8"/><path d="M40 681 L52.500 685 L51.500 688.500 L39 684.500 Z" fill="#c01828"/><path d="M38 685 L50 689.500 C49 697 42 703 35 706 C33.500 699 34 691 38 685 Z" fill="url(#g_nib)" stroke="#1c1c1c" stroke-width="1.300"/><circle cx="39.800" cy="692" r="1.700" fill="#111"/><path d="M39.800 692 L35.500 705" stroke="#111" stroke-width="1"/><path d="M30.300 724 L38.700 724 L49.500 752.500 L41.300 752.500 L39.300 746.500 L29.300 746.500 L27.400 752.500 L19.500 752.500 Z M34.400 731.500 L31.200 741 L37.500 741 Z" fill="#0a0a0a" fill-rule="evenodd"/><path d="M50.800 721.500 V754.500 M47.500 721 H54 M47.500 755 H54" stroke="#222" stroke-width="1.300" fill="none"/><circle cx="23.5" cy="772.5" r="1.7" fill="#111"/><circle cx="21.5" cy="779" r="1.7" fill="#111"/><circle cx="24.5" cy="786" r="1.9" fill="#111"/><circle cx="28.5" cy="776" r="1.2" fill="#111"/><circle cx="29.5" cy="781.5" r="1.2" fill="#111"/><circle cx="27.5" cy="770.5" r="1" fill="#111"/><circle cx="32" cy="774" r="0.9" fill="#111"/><circle cx="32.5" cy="779" r="0.9" fill="#111"/><circle cx="30" cy="784.5" r="1" fill="#111"/><circle cx="33.5" cy="783" r="0.7" fill="#111"/><path d="M38.500 781 Q38.500 776 42 776 Q45.500 776 45.500 781" fill="#f4f4f4" stroke="#222" stroke-width="1.400"/><path d="M36.500 783 L48 781.500 L55 801 L47 804 L35 799 Z" fill="url(#g_spr)" stroke="#1c3a14" stroke-width="1.200"/><path d="M37 783 L48 781.500 L48.800 784 L36.800 785.800Z" fill="#e8b040"/><path d="M35.400 815.500 L51 824.600 L35.400 850.800 L20.500 842 Z" fill="url(#g_era)" stroke="#1c1c1c" stroke-width="1.500" stroke-linejoin="round"/><ellipse cx="34" cy="896" rx="16" ry="4.500" fill="#a9dcb4" stroke="#1f5a2c" stroke-width="1.200"/><path d="M24 876 C26 886 32 886 30 896 L37 896 C35 888 38 884 36 876 Z" fill="#9ad4a6" stroke="#1f5a2c" stroke-width="1"/><path d="M23 873 L45 863.500 C51 864 54 878 51 882 L33 891.500 C26 890 22 880 23 873 Z" fill="url(#g_bkt)" stroke="#12283c" stroke-width="1.400"/><ellipse cx="28" cy="882" rx="4" ry="9.500" transform="rotate(-18 28 882)" fill="#8ccf9a" stroke="#12283c" stroke-width="1.200"/><path d="M27 872 Q28 862 31 863 Q34 866 34.500 880" fill="none" stroke="#333" stroke-width="1.600"/><rect x="19.500" y="912.500" width="33" height="33" fill="url(#g_grd)"/><path d="M27 921 L46 937" stroke="#1c2c1c" stroke-width="1.600"/><rect x="23.300" y="917.300" width="6.800" height="6.800" rx="1" fill="#fff" stroke="#223022" stroke-width="1.700"/><circle cx="46" cy="937" r="3.700" fill="#fff" stroke="#223022" stroke-width="1.700"/><path d="M32.500 983 L36.500 987 L32.500 991 M38.500 983 L42.500 987 L38.500 991" fill="none" stroke="#000" stroke-width="2"/></svg>
<div class="a" style="left:62px;top:143px;width:1391px;height:28px;background:#ece9d8"></div>
<svg style="left:0;top:0" width="1600" height="1119" viewBox="0 0 1600 1119" fill="#1c1c14"><rect x="96.60" y="147" width="1.8" height="24" /><rect x="106.18" y="166.0" width="1.8" height="5.0" /><rect x="115.77" y="161.5" width="1.8" height="9.5" /><rect x="125.35" y="166.0" width="1.8" height="5.0" /><rect x="134.94" y="161.5" width="1.8" height="9.5" /><rect x="144.53" y="166.0" width="1.8" height="5.0" /><rect x="154.11" y="161.5" width="1.8" height="9.5" /><rect x="163.69" y="166.0" width="1.8" height="5.0" /><rect x="173.28" y="161.5" width="1.8" height="9.5" /><rect x="182.86" y="166.0" width="1.8" height="5.0" /><rect x="192.45" y="147" width="1.8" height="24" /><rect x="202.03" y="166.0" width="1.8" height="5.0" /><rect x="211.62" y="161.5" width="1.8" height="9.5" /><rect x="221.20" y="166.0" width="1.8" height="5.0" /><rect x="230.79" y="161.5" width="1.8" height="9.5" /><rect x="240.37" y="166.0" width="1.8" height="5.0" /><rect x="249.96" y="161.5" width="1.8" height="9.5" /><rect x="259.55" y="166.0" width="1.8" height="5.0" /><rect x="269.13" y="161.5" width="1.8" height="9.5" /><rect x="278.72" y="166.0" width="1.8" height="5.0" /><rect x="288.30" y="147" width="1.8" height="24" /><rect x="297.88" y="166.0" width="1.8" height="5.0" /><rect x="307.47" y="161.5" width="1.8" height="9.5" /><rect x="317.06" y="166.0" width="1.8" height="5.0" /><rect x="326.64" y="161.5" width="1.8" height="9.5" /><rect x="336.23" y="166.0" width="1.8" height="5.0" /><rect x="345.81" y="161.5" width="1.8" height="9.5" /><rect x="355.39" y="166.0" width="1.8" height="5.0" /><rect x="364.98" y="161.5" width="1.8" height="9.5" /><rect x="374.56" y="166.0" width="1.8" height="5.0" /><rect x="384.15" y="147" width="1.8" height="24" /><rect x="393.73" y="166.0" width="1.8" height="5.0" /><rect x="403.32" y="161.5" width="1.8" height="9.5" /><rect x="412.90" y="166.0" width="1.8" height="5.0" /><rect x="422.49" y="161.5" width="1.8" height="9.5" /><rect x="432.07" y="166.0" width="1.8" height="5.0" /><rect x="441.66" y="161.5" width="1.8" height="9.5" /><rect x="451.25" y="166.0" width="1.8" height="5.0" /><rect x="460.83" y="161.5" width="1.8" height="9.5" /><rect x="470.41" y="166.0" width="1.8" height="5.0" /><rect x="480.00" y="147" width="1.8" height="24" /><rect x="489.58" y="166.0" width="1.8" height="5.0" /><rect x="499.17" y="161.5" width="1.8" height="9.5" /><rect x="508.75" y="166.0" width="1.8" height="5.0" /><rect x="518.34" y="161.5" width="1.8" height="9.5" /><rect x="527.92" y="166.0" width="1.8" height="5.0" /><rect x="537.51" y="161.5" width="1.8" height="9.5" /><rect x="547.10" y="166.0" width="1.8" height="5.0" /><rect x="556.68" y="161.5" width="1.8" height="9.5" /><rect x="566.26" y="166.0" width="1.8" height="5.0" /><rect x="575.85" y="147" width="1.8" height="24" /><rect x="585.44" y="166.0" width="1.8" height="5.0" /><rect x="595.02" y="161.5" width="1.8" height="9.5" /><rect x="604.61" y="166.0" width="1.8" height="5.0" /><rect x="614.19" y="161.5" width="1.8" height="9.5" /><rect x="623.77" y="166.0" width="1.8" height="5.0" /><rect x="633.36" y="161.5" width="1.8" height="9.5" /><rect x="642.95" y="166.0" width="1.8" height="5.0" /><rect x="652.53" y="161.5" width="1.8" height="9.5" /><rect x="662.12" y="166.0" width="1.8" height="5.0" /><rect x="671.70" y="147" width="1.8" height="24" /><rect x="681.28" y="166.0" width="1.8" height="5.0" /><rect x="690.87" y="161.5" width="1.8" height="9.5" /><rect x="700.45" y="166.0" width="1.8" height="5.0" /><rect x="710.04" y="161.5" width="1.8" height="9.5" /><rect x="719.62" y="166.0" width="1.8" height="5.0" /><rect x="729.21" y="161.5" width="1.8" height="9.5" /><rect x="738.79" y="166.0" width="1.8" height="5.0" /><rect x="748.38" y="161.5" width="1.8" height="9.5" /><rect x="757.96" y="166.0" width="1.8" height="5.0" /><rect x="767.55" y="147" width="1.8" height="24" /><rect x="777.13" y="166.0" width="1.8" height="5.0" /><rect x="786.72" y="161.5" width="1.8" height="9.5" /><rect x="796.30" y="166.0" width="1.8" height="5.0" /><rect x="805.89" y="161.5" width="1.8" height="9.5" /><rect x="815.47" y="166.0" width="1.8" height="5.0" /><rect x="825.06" y="161.5" width="1.8" height="9.5" /><rect x="834.64" y="166.0" width="1.8" height="5.0" /><rect x="844.23" y="161.5" width="1.8" height="9.5" /><rect x="853.81" y="166.0" width="1.8" height="5.0" /><rect x="863.40" y="147" width="1.8" height="24" /><rect x="872.99" y="166.0" width="1.8" height="5.0" /><rect x="882.57" y="161.5" width="1.8" height="9.5" /><rect x="892.15" y="166.0" width="1.8" height="5.0" /><rect x="901.74" y="161.5" width="1.8" height="9.5" /><rect x="911.32" y="166.0" width="1.8" height="5.0" /><rect x="920.91" y="161.5" width="1.8" height="9.5" /><rect x="930.50" y="166.0" width="1.8" height="5.0" /><rect x="940.08" y="161.5" width="1.8" height="9.5" /><rect x="949.66" y="166.0" width="1.8" height="5.0" /><rect x="959.25" y="147" width="1.8" height="24" /><rect x="968.84" y="166.0" width="1.8" height="5.0" /><rect x="978.42" y="161.5" width="1.8" height="9.5" /><rect x="988.00" y="166.0" width="1.8" height="5.0" /><rect x="997.59" y="161.5" width="1.8" height="9.5" /><rect x="1007.17" y="166.0" width="1.8" height="5.0" /><rect x="1016.76" y="161.5" width="1.8" height="9.5" /><rect x="1026.34" y="166.0" width="1.8" height="5.0" /><rect x="1035.93" y="161.5" width="1.8" height="9.5" /><rect x="1045.51" y="166.0" width="1.8" height="5.0" /><rect x="1055.10" y="147" width="1.8" height="24" /><rect x="1064.68" y="166.0" width="1.8" height="5.0" /><rect x="1074.27" y="161.5" width="1.8" height="9.5" /><rect x="1083.86" y="166.0" width="1.8" height="5.0" /><rect x="1093.44" y="161.5" width="1.8" height="9.5" /><rect x="1103.02" y="166.0" width="1.8" height="5.0" /><rect x="1112.61" y="161.5" width="1.8" height="9.5" /><rect x="1122.19" y="166.0" width="1.8" height="5.0" /><rect x="1131.78" y="161.5" width="1.8" height="9.5" /><rect x="1141.37" y="166.0" width="1.8" height="5.0" /><rect x="1150.95" y="147" width="1.8" height="24" /><rect x="1160.53" y="166.0" width="1.8" height="5.0" /><rect x="1170.12" y="161.5" width="1.8" height="9.5" /><rect x="1179.70" y="166.0" width="1.8" height="5.0" /><rect x="1189.29" y="161.5" width="1.8" height="9.5" /><rect x="1198.87" y="166.0" width="1.8" height="5.0" /><rect x="1208.46" y="161.5" width="1.8" height="9.5" /><rect x="1218.04" y="166.0" width="1.8" height="5.0" /><rect x="1227.63" y="161.5" width="1.8" height="9.5" /><rect x="1237.21" y="166.0" width="1.8" height="5.0" /><rect x="1246.80" y="147" width="1.8" height="24" /><rect x="1256.38" y="166.0" width="1.8" height="5.0" /><rect x="1265.97" y="161.5" width="1.8" height="9.5" /><rect x="1275.55" y="166.0" width="1.8" height="5.0" /><rect x="1285.14" y="161.5" width="1.8" height="9.5" /><rect x="1294.72" y="166.0" width="1.8" height="5.0" /><rect x="1304.31" y="161.5" width="1.8" height="9.5" /><rect x="1313.89" y="166.0" width="1.8" height="5.0" /><rect x="1323.48" y="161.5" width="1.8" height="9.5" /><rect x="1333.06" y="166.0" width="1.8" height="5.0" /><rect x="1342.65" y="147" width="1.8" height="24" /><rect x="1352.23" y="166.0" width="1.8" height="5.0" /><rect x="1361.82" y="161.5" width="1.8" height="9.5" /><rect x="1371.40" y="166.0" width="1.8" height="5.0" /><rect x="1380.99" y="161.5" width="1.8" height="9.5" /><rect x="1390.57" y="166.0" width="1.8" height="5.0" /><rect x="1400.16" y="161.5" width="1.8" height="9.5" /><rect x="1409.74" y="166.0" width="1.8" height="5.0" /><rect x="1419.33" y="161.5" width="1.8" height="9.5" /><rect x="1428.91" y="166.0" width="1.8" height="5.0" /><rect x="1438.50" y="147" width="1.8" height="24" /><rect x="1448.08" y="166.0" width="1.8" height="5.0" /><rect x="82.200" y="190.80" width="7.800" height="1.8" /><rect x="87" y="209.95" width="3" height="1.8" /><rect x="69" y="229.10" width="21" height="1.8" /><rect x="87" y="248.25" width="3" height="1.8" /><rect x="82.200" y="267.40" width="7.800" height="1.8" /><rect x="87" y="286.55" width="3" height="1.8" /><rect x="82.200" y="305.70" width="7.800" height="1.8" /><rect x="87" y="324.85" width="3" height="1.8" /><rect x="82.200" y="344.00" width="7.800" height="1.8" /><rect x="87" y="363.15" width="3" height="1.8" /><rect x="82.200" y="382.30" width="7.800" height="1.8" /><rect x="87" y="401.45" width="3" height="1.8" /><rect x="69" y="420.60" width="21" height="1.8" /><rect x="87" y="439.75" width="3" height="1.8" /><rect x="82.200" y="458.90" width="7.800" height="1.8" /><rect x="87" y="478.05" width="3" height="1.8" /><rect x="82.200" y="497.20" width="7.800" height="1.8" /><rect x="87" y="516.35" width="3" height="1.8" /><rect x="82.200" y="535.50" width="7.800" height="1.8" /><rect x="87" y="554.65" width="3" height="1.8" /><rect x="82.200" y="573.80" width="7.800" height="1.8" /><rect x="87" y="592.95" width="3" height="1.8" /><rect x="69" y="612.10" width="21" height="1.8" /><rect x="87" y="631.25" width="3" height="1.8" /><rect x="82.200" y="650.40" width="7.800" height="1.8" /><rect x="87" y="669.55" width="3" height="1.8" /><rect x="82.200" y="688.70" width="7.800" height="1.8" /><rect x="87" y="707.85" width="3" height="1.8" /><rect x="82.200" y="727.00" width="7.800" height="1.8" /><rect x="87" y="746.15" width="3" height="1.8" /><rect x="82.200" y="765.30" width="7.800" height="1.8" /><rect x="87" y="784.45" width="3" height="1.8" /><rect x="69" y="803.60" width="21" height="1.8" /><rect x="87" y="822.75" width="3" height="1.8" /><rect x="82.200" y="841.90" width="7.800" height="1.8" /><rect x="87" y="861.05" width="3" height="1.8" /><rect x="82.200" y="880.20" width="7.800" height="1.8" /><rect x="87" y="899.35" width="3" height="1.8" /><rect x="82.200" y="918.50" width="7.800" height="1.8" /><rect x="87" y="937.65" width="3" height="1.8" /><rect x="82.200" y="956.80" width="7.800" height="1.8" /><path d="M81 176.500 L89.500 182.800 L81 189 Z"/><path d="M1067 160 L1080.500 160 L1073.700 171 Z"/></svg>
<div class="t" style="left:101.30px;top:144.92px;font-size:12.50px;color:#6a6a62;transform:scaleX(.83);transform-origin:0 0;">-125</div>
<div class="t" style="left:197.15px;top:144.92px;font-size:12.50px;color:#6a6a62;transform:scaleX(.83);transform-origin:0 0;">-100</div>
<div class="t" style="left:293.00px;top:144.92px;font-size:12.50px;color:#6a6a62;transform:scaleX(.83);transform-origin:0 0;">-75</div>
<div class="t" style="left:388.85px;top:144.92px;font-size:12.50px;color:#6a6a62;transform:scaleX(.83);transform-origin:0 0;">-50</div>
<div class="t" style="left:484.70px;top:144.92px;font-size:12.50px;color:#6a6a62;transform:scaleX(.83);transform-origin:0 0;">-25</div>
<div class="t" style="left:580.55px;top:144.92px;font-size:12.50px;color:#6a6a62;transform:scaleX(.83);transform-origin:0 0;">0</div>
<div class="t" style="left:676.40px;top:144.92px;font-size:12.50px;color:#6a6a62;transform:scaleX(.83);transform-origin:0 0;">25</div>
<div class="t" style="left:772.25px;top:144.92px;font-size:12.50px;color:#6a6a62;transform:scaleX(.83);transform-origin:0 0;">50</div>
<div class="t" style="left:868.10px;top:144.92px;font-size:12.50px;color:#6a6a62;transform:scaleX(.83);transform-origin:0 0;">75</div>
<div class="t" style="left:963.95px;top:144.92px;font-size:12.50px;color:#6a6a62;transform:scaleX(.83);transform-origin:0 0;">100</div>
<div class="t" style="left:1059.80px;top:144.92px;font-size:12.50px;color:#6a6a62;transform:scaleX(.83);transform-origin:0 0;">125</div>
<div class="t" style="left:1155.65px;top:144.92px;font-size:12.50px;color:#6a6a62;transform:scaleX(.83);transform-origin:0 0;">150</div>
<div class="t" style="left:1251.50px;top:144.92px;font-size:12.50px;color:#6a6a62;transform:scaleX(.83);transform-origin:0 0;">175</div>
<div class="t" style="left:1347.35px;top:144.92px;font-size:12.50px;color:#6a6a62;transform:scaleX(.83);transform-origin:0 0;">200</div>
<div class="t" style="left:1443.20px;top:144.92px;font-size:12.50px;color:#6a6a62;transform:scaleX(.83);transform-origin:0 0;">2</div>
<div class="t" style="left:69.50px;top:233.02px;font-size:12.50px;color:#6a6a62;transform:scaleX(.9);transform-origin:0 0;">1</div>
<div class="t" style="left:69.50px;top:245.92px;font-size:12.50px;color:#6a6a62;transform:scaleX(.9);transform-origin:0 0;">5</div>
<div class="t" style="left:69.50px;top:258.82px;font-size:12.50px;color:#6a6a62;transform:scaleX(.9);transform-origin:0 0;">0</div>
<div class="t" style="left:69.50px;top:424.52px;font-size:12.50px;color:#6a6a62;transform:scaleX(.9);transform-origin:0 0;">1</div>
<div class="t" style="left:69.50px;top:437.42px;font-size:12.50px;color:#6a6a62;transform:scaleX(.9);transform-origin:0 0;">0</div>
<div class="t" style="left:69.50px;top:450.32px;font-size:12.50px;color:#6a6a62;transform:scaleX(.9);transform-origin:0 0;">0</div>
<div class="t" style="left:69.50px;top:616.02px;font-size:12.50px;color:#6a6a62;transform:scaleX(.9);transform-origin:0 0;">5</div>
<div class="t" style="left:69.50px;top:628.92px;font-size:12.50px;color:#6a6a62;transform:scaleX(.9);transform-origin:0 0;">0</div>
<div class="t" style="left:69.50px;top:807.52px;font-size:12.50px;color:#6a6a62;transform:scaleX(.9);transform-origin:0 0;">0</div>
<div class="a" style="left:90px;top:171px;width:1363px;height:802px;background:#fff"></div>
<div class="a" style="left:581px;top:345px;width:391px;height:464px;background:#6e6e6e"></div>
<div class="a" style="left:576px;top:340px;width:392.500px;height:465px;background:#fff;border:1.500px solid #7a7a7a"></div>
<svg style="left:0;top:0" width="1600" height="1119" viewBox="0 0 1600 1119"><defs><filter id="bl" x="-5%" y="-5%" width="110%" height="110%"><feGaussianBlur stdDeviation="0.9"/></filter></defs><polygon fill="#ffff00" filter="url(#bl)" points="714.2,345.5 724.8,426.0 793.4,459.7 726.0,496.0 712.0,577.3 656.2,523.9 581.0,537.8 616.7,463.4 582.8,395.0 658.5,405.3"/><polygon fill="#ff0000" filter="url(#bl)" points="801.3,413.2 863.1,455.0 929.6,421.6 915.6,509.0 963.0,568.0 893.3,575.0 853.8,650.8 823.6,575.0 752.9,552.7 809.6,498.3"/><polygon fill="#008000" filter="url(#bl)" points="664.6,564.8 732.9,607.5 808.7,574.0 793.4,656.3 844.5,719.1 763.1,727.0 723.6,799.0 691.1,721.4 612.0,702.8 670.2,651.7"/></svg>
<div class="a" style="left:1455px;top:176px;width:27px;height:797px;background:linear-gradient(to right,#f1efe6,#fbfaf6 40%,#fefefc)"></div>
<div class="a" style="left:1458px;top:178px;width:23px;height:24px;background:linear-gradient(135deg,#cbd8fc 0,#bccbf7 50%,#aebff0 100%);border:1.5px solid #f4f7ff;border-radius:3px;box-shadow:0 1px 1px #9aa9d0"></div>
<svg style="left:1458.0px;top:178.0px" width="23.0" height="24.0" viewBox="0 0 23 24"><path d="M5.500 14.500 L11.500 8.500 L17.500 14.500" fill="none" stroke="#4d6185" stroke-width="3.200"/></svg>
<div class="a" style="left:1458px;top:948px;width:23px;height:24px;background:linear-gradient(135deg,#cbd8fc 0,#bccbf7 50%,#aebff0 100%);border:1.5px solid #f4f7ff;border-radius:3px;box-shadow:0 1px 1px #9aa9d0"></div>
<svg style="left:1458.0px;top:948.0px" width="23.0" height="24.0" viewBox="0 0 23 24"><path d="M5.500 9 L11.500 15 L17.500 9" fill="none" stroke="#4d6185" stroke-width="3.200"/></svg>
<div class="a" style="left:1458px;top:390px;width:23px;height:370px;background:linear-gradient(to right,#c9d6fc 0,#bdcdf9 50%,#aec0f3 100%);border:1.5px solid #f4f7ff;border-radius:3px;box-shadow:1px 1px 1px #9aa9d0"></div>
<svg style="left:1458.0px;top:569.0px" width="23.0" height="12.0" viewBox="0 0 23 12"><rect x="6" y="0" width="10" height="1.200" fill="#eef3ff"/><rect x="6.500" y="1.2" width="10" height="1" fill="#8fa3dc"/><rect x="6" y="3" width="10" height="1.200" fill="#eef3ff"/><rect x="6.500" y="4.2" width="10" height="1" fill="#8fa3dc"/><rect x="6" y="6" width="10" height="1.200" fill="#eef3ff"/><rect x="6.500" y="7.2" width="10" height="1" fill="#8fa3dc"/><rect x="6" y="9" width="10" height="1.200" fill="#eef3ff"/><rect x="6.500" y="10.2" width="10" height="1" fill="#8fa3dc"/></svg>
<div class="a" style="left:90px;top:973.500px;width:1363px;height:31px;background:linear-gradient(#f0eee4,#f8f7f1 30%,#fdfdfa)"></div>
<div class="a" style="left:91px;top:979px;width:24px;height:23px;background:linear-gradient(135deg,#cbd8fc 0,#bccbf7 50%,#aebff0 100%);border:1.5px solid #f4f7ff;border-radius:3px;box-shadow:0 1px 1px #9aa9d0"></div>
<svg style="left:91.0px;top:979.0px" width="24.0" height="23.0" viewBox="0 0 24 23"><path d="M14.500 5.500 L8.500 11.500 L14.500 17.500" fill="none" stroke="#4d6185" stroke-width="3.200"/></svg>
<div class="a" style="left:1427px;top:979px;width:24px;height:23px;background:linear-gradient(135deg,#cbd8fc 0,#bccbf7 50%,#aebff0 100%);border:1.5px solid #f4f7ff;border-radius:3px;box-shadow:0 1px 1px #9aa9d0"></div>
<svg style="left:1427.0px;top:979.0px" width="24.0" height="23.0" viewBox="0 0 24 23"><path d="M9.500 5.500 L15.500 11.500 L9.500 17.500" fill="none" stroke="#4d6185" stroke-width="3.200"/></svg>
<div class="a" style="left:122px;top:979px;width:1296px;height:23px;background:linear-gradient(to bottom,#c9d6fc 0,#bdcdf9 50%,#aec0f3 100%);border:1.5px solid #f4f7ff;border-radius:3px;box-shadow:1px 1px 1px #9aa9d0"></div>
<svg style="left:763.0px;top:979.0px" width="12.0" height="23.0" viewBox="0 0 12 23"><rect x="0" y="6" width="1.200" height="10" fill="#eef3ff"/><rect x="1.2" y="6.500" width="1" height="10" fill="#8fa3dc"/><rect x="3" y="6" width="1.200" height="10" fill="#eef3ff"/><rect x="4.2" y="6.500" width="1" height="10" fill="#8fa3dc"/><rect x="6" y="6" width="1.200" height="10" fill="#eef3ff"/><rect x="7.2" y="6.500" width="1" height="10" fill="#8fa3dc"/><rect x="9" y="6" width="1.200" height="10" fill="#eef3ff"/><rect x="10.2" y="6.500" width="1" height="10" fill="#8fa3dc"/></svg>
<svg style="left:1456.0px;top:146.0px" width="28.0" height="28.0" viewBox="0 0 28 28"><defs><radialGradient id="z11" cx=".4" cy=".3" r=".8"><stop offset="0" stop-color="#fff"/><stop offset="1" stop-color="#b8cde6"/></radialGradient></defs>
<path d="M20 20 L25.500 25" stroke="#111" stroke-width="4.500" stroke-linecap="round"/><circle cx="13.300" cy="12.800" r="10.400" fill="url(#z11)" stroke="#1c1c1c" stroke-width="2.200"/>
<text x="13.300" y="18" style="font-family:'Liberation Sans',sans-serif" font-weight="bold" font-size="14" text-anchor="middle" fill="#111" textLength="16" lengthAdjust="spacingAndGlyphs">1:1</text></svg>
<svg style="left:0.0px;top:0.0px" width="1600.0" height="1119.0" viewBox="0 0 1600 1119"><defs><linearGradient id="cm1" x1="0" y1="0" x2="0" y2="1"><stop offset="0" stop-color="#4a9a58"/><stop offset=".4" stop-color="#5cc07a"/><stop offset=".65" stop-color="#62c4b4"/><stop offset=".85" stop-color="#5a7ac8"/><stop offset="1" stop-color="#4a4a98"/></linearGradient>
<radialGradient id="cm2" gradientUnits="userSpaceOnUse" cx="1479" cy="994.500" r="9"><stop offset="0" stop-color="#b04a5a"/><stop offset=".45" stop-color="#d87a98" stop-opacity=".85"/><stop offset="1" stop-color="#d8a0d0" stop-opacity="0"/></radialGradient></defs>
<path d="M1463 978.200 L1480.600 994.600 L1464.400 1003 Q1459.600 992 1459 982 Z" fill="url(#cm1)"/><path d="M1463 978.200 L1480.600 994.600 L1464.400 1003 Q1459.600 992 1459 982 Z" fill="url(#cm2)" stroke="#4a5a44" stroke-opacity=".7" stroke-width="1.200" stroke-linejoin="round"/></svg>
<div class="a" style="left:1483px;top:142px;width:14px;height:866px;background:#ece9d8"></div>
<div class="a" style="left:1496px;top:143px;width:1.500px;height:864px;background:#c9c6b6"></div>
<div class="a" style="left:1497.500px;top:142px;width:49px;height:866px;background:linear-gradient(to right,#f7f6f1 0,#f1efe6 45%,#eae7d7 100%)"></div>
<div class="a" style="left:1546px;top:142px;width:47.500px;height:866px;background:linear-gradient(to right,#f7f6f1 0,#f1efe6 45%,#eae7d7 100%)"></div>
<div class="btn" style="left:1549px;top:146px;width:41px;height:40px"></div>
<div class="btn" style="left:1549px;top:431px;width:41px;height:40px"></div>
<div class="btn" style="left:1549px;top:820px;width:41px;height:40px"></div>
<div class="btn" style="left:1549px;top:862px;width:41px;height:40px"></div>
<svg style="left:0;top:0" width="1600" height="1119" viewBox="0 0 1600 1119"><defs>
<linearGradient id="r_doc" x1="0" y1="0" x2="1" y2="1"><stop offset="0" stop-color="#ffffff"/><stop offset="1" stop-color="#d6d6d2"/></linearGradient>
<linearGradient id="r_fold" x1="0" y1="0" x2="0" y2="1"><stop offset="0" stop-color="#dfe3c4"/><stop offset="1" stop-color="#b9c19a"/></linearGradient>
<linearGradient id="r_blu" x1="0" y1="0" x2="1" y2="1"><stop offset="0" stop-color="#eef4fa"/><stop offset="1" stop-color="#9fb9d6"/></linearGradient>
<radialGradient id="r_lens" cx=".4" cy=".3" r=".8"><stop offset="0" stop-color="#fff"/><stop offset="1" stop-color="#b4cae4"/></radialGradient>
<pattern id="r_dotY" width="2" height="2" patternUnits="userSpaceOnUse"><rect width="2" height="2" fill="#e6dca0"/><rect width="1" height="1" fill="#b8a848"/><rect x="1" y="1" width="1" height="1" fill="#b8a848"/></pattern>
<pattern id="r_dotG" width="2" height="2" patternUnits="userSpaceOnUse"><rect width="2" height="2" fill="#b4cc9c"/><rect width="1" height="1" fill="#6a9850"/><rect x="1" y="1" width="1" height="1" fill="#6a9850"/></pattern>
</defs><path d="M1512.500 154.500 h14 l6.500 6.500 v16.500 h-20.500 z" fill="url(#r_doc)" stroke="#a9a9a4" stroke-width="1.600" stroke-linejoin="round"/><path d="M1526.500 154.500 v6.500 h6.500" fill="#f4f4f2" stroke="#b4b4b0" stroke-width="1"/><path d="M1511 217.500 v-20 h9 l2 3 h11 v17 z" fill="#c8cdae" stroke="#8a9070" stroke-width="1.500" stroke-linejoin="round"/><path d="M1511.500 217.500 l3 -11 h20.500 l-2.500 11 z" fill="url(#r_fold)" stroke="#8a9070" stroke-width="1.300" stroke-linejoin="round"/><rect x="1510.500" y="236.500" width="24" height="24" rx="2" fill="#3a66b4" stroke="#24478a" stroke-width="1.400"/><rect x="1513.500" y="237.500" width="18" height="11" fill="#f6f6f6"/><rect x="1513.500" y="237.500" width="18" height="4.500" fill="#e0202a"/><rect x="1515.500" y="251" width="13" height="9" fill="#d8d8d8" stroke="#777" stroke-width=".8"/><rect x="1517.500" y="252.500" width="3.500" height="6" fill="#34507a"/><path d="M1515.500 287 v-9 h14 v9" fill="#f4f4f4" stroke="#888" stroke-width="1.400"/><path d="M1518 281.500 h9 M1518 284.500 h9" stroke="#aaa" stroke-width="1"/><rect x="1510.500" y="287" width="24.500" height="14" rx="2.500" fill="#e4e4e0" stroke="#777" stroke-width="1.600"/><path d="M1514 296.500 h17.500" stroke="#666" stroke-width="2.200"/><path d="M1510 318.5 H1535" stroke="#bdbaa9" stroke-width="1.400"/><path d="M1510 319.7 H1535" stroke="#fbfaf6" stroke-width="1"/><path d="M1516.500 338 h11 l6 6 v17 h-17 z" fill="url(#r_doc)" stroke="#111" stroke-width="1.800" stroke-linejoin="round"/><path d="M1527.500 338 v6 h6" fill="none" stroke="#111" stroke-width="1.200"/><path d="M1509.500 350.500 h12" stroke="#000" stroke-width="2"/><path d="M1520 346 l5.500 4.500 l-5.500 4.500z" fill="#000"/><path d="M1510.500 379 h11 l6 6 v17 h-17 z" fill="url(#r_doc)" stroke="#111" stroke-width="1.800" stroke-linejoin="round"/><path d="M1521.500 379 v6 h6" fill="none" stroke="#111" stroke-width="1.200"/><path d="M1519.500 391.500 h11" stroke="#000" stroke-width="2"/><path d="M1529 387 l5.500 4.500 l-5.500 4.500z" fill="#000"/><path d="M1510 420 H1535" stroke="#bdbaa9" stroke-width="1.400"/><path d="M1510 421.2 H1535" stroke="#fbfaf6" stroke-width="1"/><path d="M1510 449.500 L1521.500 439.500 L1521.500 445 C1530 445 1535 450 1535 457 C1535 461 1532 464 1529 464.500 C1531 460 1528 456 1521.500 456 L1521.500 460.500 Z" fill="url(#r_dotY)"/><path d="M1535 491.500 L1523.500 481.500 L1523.500 487 C1515 487 1510 492 1510 499 C1510 503 1513 506 1516 506.500 C1514 502 1517 498 1523.500 498 L1523.500 502.500 Z" fill="url(#r_dotG)"/><path d="M1510 521.5 H1535" stroke="#bdbaa9" stroke-width="1.400"/><path d="M1510 522.7 H1535" stroke="#fbfaf6" stroke-width="1"/><rect x="1510.500" y="540" width="17" height="18" fill="#f4f4f2" stroke="#b4b4b0" stroke-width="1.300"/><path d="M1516.500 545.500 h18 v12.500 l-5.500 5.500 h-12.500 z" fill="#fbfbfa" stroke="#9a9a96" stroke-width="1.400" stroke-linejoin="round"/><path d="M1519.500 549.500 h12 M1519.500 552.500 h12 M1519.500 555.500 h9" stroke="#b4b4b0" stroke-width="1.100"/><path d="M1534.500 558 h-5.500 v5.500" fill="none" stroke="#9a9a96" stroke-width="1"/><path d="M1513.500 581.500 L1524 598 M1531.500 581.500 L1521 598" stroke="#b8b8b4" stroke-width="3.600" stroke-linecap="round"/><path d="M1513.500 581.500 L1524 598 M1531.500 581.500 L1521 598" stroke="#e8e8e6" stroke-width="1.600" stroke-linecap="round"/><rect x="1510.500" y="596.500" width="10.500" height="9.500" rx="2.500" fill="#d68a1a" stroke="#8a560c" stroke-width="1.200"/><rect x="1524" y="596.500" width="10.500" height="9.500" rx="2.500" fill="#d68a1a" stroke="#8a560c" stroke-width="1.200"/><rect x="1513.800" y="599.500" width="3.800" height="3.500" fill="#f4dca8"/><rect x="1527.300" y="599.500" width="3.800" height="3.500" fill="#f4dca8"/><rect x="1511.500" y="624.500" width="22" height="22.500" rx="2" fill="#c8861e" stroke="#7a5010" stroke-width="1.500"/><rect x="1518" y="622.500" width="9" height="4.500" rx="1.500" fill="#999" stroke="#555" stroke-width="1"/><path d="M1515 628.500 h15 v11 l-4.500 4.500 h-10.500 z" fill="#fbfbfa" stroke="#999" stroke-width="1"/><path d="M1517.500 632 h10 M1517.500 635 h10 M1517.500 638 h7" stroke="#bbb" stroke-width="1"/><path d="M1510 663.7 H1535" stroke="#bdbaa9" stroke-width="1.400"/><path d="M1510 664.9 H1535" stroke="#fbfaf6" stroke-width="1"/><path d="M1529.500 701.5 L1533.500 705.5" stroke="#111" stroke-width="4.200" stroke-linecap="round"/><circle cx="1521.500" cy="693.3" r="10.600" fill="url(#r_lens)" stroke="#2a2a2a" stroke-width="2"/><rect x="1515" y="688.3" width="13" height="10" fill="#fff" stroke="#111" stroke-width="1.600" stroke-dasharray="1.600 1.400"/><path d="M1529.500 743.5 L1533.500 747.5" stroke="#111" stroke-width="4.200" stroke-linecap="round"/><circle cx="1521.500" cy="735.3" r="10.600" fill="url(#r_lens)" stroke="#2a2a2a" stroke-width="2"/><rect x="1515.500" y="728.8" width="7" height="7" fill="#f4e07a" stroke="#3a3210" stroke-width="1.200"/><rect x="1520" y="733.3" width="7.500" height="7.500" fill="#f4d24a" stroke="#3a3210" stroke-width="1.200"/><path d="M1529.500 784.6 L1533.500 788.6" stroke="#111" stroke-width="4.200" stroke-linecap="round"/><circle cx="1521.500" cy="776.4" r="10.600" fill="url(#r_lens)" stroke="#2a2a2a" stroke-width="2"/><rect x="1516.500" y="770.2" width="10" height="12.500" fill="url(#r_doc)" stroke="#222" stroke-width="1.600"/><path d="M1510 806.3 H1535" stroke="#bdbaa9" stroke-width="1.400"/><path d="M1510 807.5 H1535" stroke="#fbfaf6" stroke-width="1"/><rect x="1510.500" y="826" width="14" height="13" fill="#dbe5f0" stroke="#333" stroke-width="1.500"/><rect x="1516.500" y="831.500" width="17.500" height="17.500" fill="url(#r_blu)" stroke="#222" stroke-width="1.700"/><rect x="1510.500" y="866.500" width="14" height="13" fill="#dbe5f0" stroke="#333" stroke-width="1.500"/><rect x="1516.500" y="872" width="17.500" height="18" fill="#e8ecf0" stroke="#222" stroke-width="1.700"/><path d="M1522 880 v-2 q0 -3.500 3.500 -3.500 q3.500 0 3.500 3.500 v2" fill="none" stroke="#222" stroke-width="1.500"/><rect x="1520.500" y="880" width="10" height="6.500" fill="#f4c030" stroke="#5a4408" stroke-width="1"/><rect x="1510.500" y="907.500" width="14" height="13" fill="#dbe5f0" stroke="#333" stroke-width="1.500"/><rect x="1516.500" y="913" width="17.500" height="18" fill="#e8ecf0" stroke="#222" stroke-width="1.700"/><path d="M1522 920 q0 -4 3.500 -4 q3.500 0 3.500 3.500 v2" fill="none" stroke="#222" stroke-width="1.500"/><rect x="1520.500" y="921.500" width="10" height="6.500" fill="#8cc860" stroke="#2c4a14" stroke-width="1"/><path d="M1510 949 H1535" stroke="#bdbaa9" stroke-width="1.400"/><path d="M1510 950.2 H1535" stroke="#fbfaf6" stroke-width="1"/><path d="M1518 983 L1522 987 L1518 991 M1524 983 L1528 987 L1524 991" fill="none" stroke="#000" stroke-width="2"/><path d="M1564 160 L1578 174" stroke="#111" stroke-width="2"/><path d="M1571 172.500 l7.500 2.500 l-2.500 -7.500z" fill="#111"/><path d="M1563.5 155.3 l4.2 4.2 l-4.2 4.2 l-4.2 -4.2 z" fill="#a0a0f8" stroke="#2020d8" stroke-width="1.400"/><path d="M1580 171.3 l4.2 4.2 l-4.2 4.2 l-4.2 -4.2 z" fill="#a8d8a8" stroke="#2a8a3a" stroke-width="1.400"/><path d="M1557.5 195.5 H1583" stroke="#bdbaa9" stroke-width="1.400"/><path d="M1557.5 196.7 H1583" stroke="#fbfaf6" stroke-width="1"/><path d="M1566 218.500 H1583" stroke="#444" stroke-width="2.200" stroke-dasharray="2.400 1.400"/><path d="M1562.500 222 V1538" stroke="none"/><path d="M1562.500 222 V238" stroke="#444" stroke-width="2.200" stroke-dasharray="2.400 1.400"/><path d="M1562.5 214.5 l4 4 l-4 4 l-4 -4 z" fill="#5050f0" stroke="#2020d8" stroke-width="1.400"/><path d="M1558 277 H1575 M1577.500 277 V256" stroke="#8a9a86" stroke-width="1.800" stroke-dasharray="2 2"/><path d="M1558 316.500 H1572 M1577.500 312 V297" stroke="#8a9a86" stroke-width="1.800" stroke-dasharray="2 2"/><path d="M1577.5 312.5 l4 4 l-4 4 l-4 -4 z" fill="#9ab09a" stroke="#6a8a6a" stroke-width="1.400"/><path d="M1558.500 357.500 H1575" stroke="#222" stroke-width="1.800" stroke-dasharray="2 1.200"/><path d="M1577.500 357.500 V348" stroke="#777" stroke-width="1.800" stroke-dasharray="2 1.200"/><path d="M1577.5 339.4 l3.6 3.6 l-3.6 3.6 l-3.6 -3.6 z" fill="#a8d0a8" stroke="#4a8a5a" stroke-width="1.400"/><path d="M1558 398 H1577.500 V379" fill="none" stroke="#222" stroke-width="1.800" stroke-dasharray="2 1.400"/><path d="M1563 382.2 l2.8 2.8 l-2.8 2.8 l-2.8 -2.8 z" fill="#a8d0a8" stroke="#4a8a5a" stroke-width="1.400"/><path d="M1557.5 420 H1583" stroke="#bdbaa9" stroke-width="1.400"/><path d="M1557.5 421.2 H1583" stroke="#fbfaf6" stroke-width="1"/><path d="M1560 452 C1562 445 1566 444 1569 446 C1566 456 1572 462 1583 463" fill="none" stroke="#777" stroke-width="1.800"/><path d="M1571.5 440.5 l4 4 l-4 4 l-4 -4 z" fill="#6060f4" stroke="#2020d8" stroke-width="1.400"/><path d="M1558.500 483 C1572 486 1576 494 1569 501" fill="none" stroke="#1f9a2f" stroke-width="2.400"/><path d="M1566 496.500 L1568.500 502.500 L1580 494" fill="none" stroke="#1f9a2f" stroke-width="2.200"/><path d="M1559.500 543.500 L1581.500 522.500" stroke="#222" stroke-width="1.600"/><path d="M1559 534 C1566 538 1574 528 1582 531" fill="none" stroke="#555" stroke-width="1.400"/><path d="M1570.5 530 l3 3 l-3 3 l-3 -3 z" fill="#8ab08a" stroke="#3a5a3a" stroke-width="1.400"/><path d="M1559 563 C1570 566 1575 574 1572 580 M1574 583 C1580 582 1582 576 1582 572" fill="none" stroke="#666" stroke-width="1.800"/><path d="M1570.5 577.8 l4.2 4.2 l-4.2 4.2 l-4.2 -4.2 z" fill="#4aa05a" stroke="#1f6a2f" stroke-width="1.400"/><path d="M1559 604.500 L1566 606.500 M1572 612 C1568 622 1574 626 1582 616" fill="none" stroke="#666" stroke-width="1.800"/><rect x="1565.500" y="604" width="7" height="7" fill="#4aa05a" stroke="#1f6a2f" stroke-width="1.200"/><path d="M1559.500 664 L1582.500 647" stroke="#d02030" stroke-width="1.400"/><path d="M1561 658 l4 8 M1563 656.500 l4 8 M1577 646 l4 8 M1579 644.500 l4 8" stroke="#d02030" stroke-width="1.500"/><circle cx="1571" cy="655.500" r="2.800" fill="#4aa05a" stroke="#1f6a2f" stroke-width="1"/><path d="M1557.500 706 H1577.500 V686" fill="none" stroke="#888" stroke-width="1.800"/><circle cx="1565" cy="694" r="2.500" fill="#7ac87a" stroke="#2a8a3a" stroke-width="1.300"/><path d="M1557.500 747.500 H1577 M1577.500 747.500 V727" stroke="#333" stroke-width="1.800" stroke-dasharray="2 1.300"/><path d="M1560.500 736.500 h9 M1565 732 v9" stroke="#222" stroke-width="1.800"/><path d="M1557.5 768 H1583" stroke="#bdbaa9" stroke-width="1.400"/><path d="M1557.5 769.2 H1583" stroke="#fbfaf6" stroke-width="1"/><rect x="1561.500" y="788" width="16" height="21.500" fill="url(#r_doc)" stroke="#222" stroke-width="1.800"/><path d="M1560.7 828.500 V855" stroke="#1414e8" stroke-width="1.900"/><path d="M1567.4 828.500 V855" stroke="#1414e8" stroke-width="1.900"/><path d="M1574.1 828.500 V855" stroke="#1414e8" stroke-width="1.900"/><path d="M1581 828.500 V855" stroke="#1414e8" stroke-width="1.900"/><path d="M1558.800 832 H1584" stroke="#1414e8" stroke-width="1.900"/><path d="M1558.800 839 H1584" stroke="#1414e8" stroke-width="1.900"/><path d="M1558.800 846 H1584" stroke="#1414e8" stroke-width="1.900"/><path d="M1558.800 852.6 H1584" stroke="#1414e8" stroke-width="1.900"/><path d="M1561.500 870 V894 M1578.500 870 V894 M1566.500 894 L1576 870" stroke="#2a2ae0" stroke-width="1.700" fill="none"/></svg>
<div class="a" style="left:9px;top:1008px;width:1584px;height:64px;background:#ece9d8"></div>
<div class="a" style="left:9px;top:1008px;width:1558px;height:64px;background:#f5f4ee"></div>
<div class="a" style="left:9px;top:1007px;width:1584px;height:2.500px;background:linear-gradient(rgba(120,118,105,.0),rgba(90,88,78,.55))"></div>
<div class="a" style="left:10px;top:1009.500px;width:1556px;height:31.500px;background:#111"></div>
<div class="a" style="left:11px;top:1011px;width:32px;height:30px;background:#fff"></div>
<svg style="left:11px;top:1011px" width="32" height="30" viewBox="0 0 32 30"><path d="M1 1 L31 29 M31 1 L1 29" stroke="#7a1414" stroke-width="2.400"/></svg>
<div class="a" style="left:42.500px;top:1011px;width:1523.500px;height:30px;background:linear-gradient(to right,#000000 0.00px,#000000 30.07px,#1a1a1a 30.07px,#1a1a1a 60.15px,#333333 60.15px,#333333 90.22px,#4d4d4d 90.22px,#4d4d4d 120.30px,#666666 120.30px,#666666 150.38px,#808080 150.38px,#808080 180.45px,#999999 180.45px,#999999 210.53px,#b3b3b3 210.53px,#b3b3b3 240.60px,#cccccc 240.60px,#cccccc 270.68px,#e6e6e6 270.68px,#e6e6e6 300.75px,#ececec 300.75px,#ececec 330.82px,#f2f2f2 330.82px,#f2f2f2 360.90px,#f9f9f9 360.90px,#f9f9f9 390.97px,#ffffff 390.97px,#ffffff 421.05px,#800000 421.05px,#800000 451.12px,#ff0000 451.12px,#ff0000 481.20px,#808000 481.20px,#808000 511.27px,#ffff00 511.27px,#ffff00 541.35px,#008000 541.35px,#008000 571.42px,#00ff00 571.42px,#00ff00 601.50px,#008080 601.50px,#008080 631.57px,#00ffff 631.57px,#00ffff 661.65px,#000080 661.65px,#000080 691.73px,#0000ff 691.73px,#0000ff 721.80px,#800080 721.80px,#800080 751.88px,#ff00ff 751.88px,#ff00ff 781.95px,#2b0000 781.95px,#2b0000 812.02px,#550000 812.02px,#550000 842.10px,#800000 842.10px,#800000 872.17px,#aa0000 872.17px,#aa0000 902.25px,#d40000 902.25px,#d40000 932.32px,#ff0000 932.32px,#ff0000 962.40px,#ff2a2a 962.40px,#ff2a2a 992.48px,#ff5555 992.48px,#ff5555 1022.55px,#ff8080 1022.55px,#ff8080 1052.62px,#ffaaaa 1052.62px,#ffaaaa 1082.70px,#ffd5d5 1082.70px,#ffd5d5 1112.77px,#280b0b 1112.77px,#280b0b 1142.85px,#501616 1142.85px,#501616 1172.92px,#782121 1172.92px,#782121 1203.00px,#a02c2c 1203.00px,#a02c2c 1233.08px,#c83737 1233.08px,#c83737 1263.15px,#d35f5f 1263.15px,#d35f5f 1293.22px,#de8787 1293.22px,#de8787 1323.30px,#e9afaf 1323.30px,#e9afaf 1353.38px,#f4d7d7 1353.38px,#f4d7d7 1383.45px,#241c1c 1383.45px,#241c1c 1413.52px,#483737 1413.52px,#483737 1443.60px,#6c5353 1443.60px,#6c5353 1473.67px,#916f6f 1473.67px,#916f6f 1503.75px,#ac9393 1503.75px,#ac9393 1533.83px)"></div>
<svg style="left:1574.500px;top:1013.500px" width="10" height="14" viewBox="0 0 10 14"><path d="M8.500 1 L8.500 13 L1.500 7 Z" fill="#000"/></svg>
<div class="a" style="left:10px;top:1046px;width:1558px;height:25px;background:linear-gradient(#f1efe6,#fbfaf6 40%,#fefefc)"></div>
<div class="a" style="left:11px;top:1049px;width:22px;height:21px;background:#eeede5;border:1.5px solid #fbfbf8;border-radius:3px"></div>
<svg style="left:10.500px;top:1048.500px" width="23" height="22" viewBox="0 0 23 22"><path d="M14 5 L8 11 L14 17" fill="none" stroke="#c9c7ba" stroke-width="3"/></svg>
<div class="a" style="left:37px;top:1049px;width:178px;height:22px;background:linear-gradient(to bottom,#c9d6fc 0,#bdcdf9 50%,#aec0f3 100%);border:1.5px solid #f4f7ff;border-radius:3px;box-shadow:1px 1px 1px #9aa9d0"></div>
<svg style="left:119px;top:1049px" width="12" height="22" viewBox="0 0 12 22"><rect x="0" y="6" width="1.200" height="10" fill="#eef3ff"/><rect x="1.2" y="6.500" width="1" height="10" fill="#8fa3dc"/><rect x="3" y="6" width="1.200" height="10" fill="#eef3ff"/><rect x="4.2" y="6.500" width="1" height="10" fill="#8fa3dc"/><rect x="6" y="6" width="1.200" height="10" fill="#eef3ff"/><rect x="7.2" y="6.500" width="1" height="10" fill="#8fa3dc"/><rect x="9" y="6" width="1.200" height="10" fill="#eef3ff"/><rect x="10.2" y="6.500" width="1" height="10" fill="#8fa3dc"/></svg>
<div class="a" style="left:1543px;top:1048.500px;width:23px;height:21px;background:linear-gradient(135deg,#cbd8fc 0,#bccbf7 50%,#aebff0 100%);border:1.5px solid #f4f7ff;border-radius:3px;box-shadow:0 1px 1px #9aa9d0"></div>
<svg style="left:1542.500px;top:1048px" width="24" height="22" viewBox="0 0 24 22"><path d="M9.500 5 L15.500 11 L9.500 17" fill="none" stroke="#4d6185" stroke-width="3.200"/></svg>
<div class="a" style="left:9px;top:1072px;width:1584px;height:43px;background:#ece9d8"></div>
<div class="t" style="left:12.00px;top:1074.61px;font-size:17.00px;color:#000;transform:scaleX(0.9078);transform-origin:0 0;">Fill:</div>
<div class="t" style="left:12.00px;top:1096.81px;font-size:17.00px;color:#000;transform:scaleX(1.0027);transform-origin:0 0;">Stroke:</div>
<div class="t" style="left:123.00px;top:1074.61px;font-size:17.00px;color:#000;transform:scaleX(0.9704);transform-origin:0 0;">N/A</div>
<div class="t" style="left:123.00px;top:1096.81px;font-size:17.00px;color:#000;transform:scaleX(0.9704);transform-origin:0 0;">N/A</div>
<div class="t" style="left:209.00px;top:1085.33px;font-size:16.50px;color:#000;transform:scaleX(0.9186);transform-origin:0 0;">O:</div>
<div class="a" style="left:230px;top:1076px;width:43px;height:34px;border:2px solid #8298b6;border-right-color:#fdfdfc;background:#ece9d8;box-shadow:inset 0 0 0 1px #fdfdfc"></div>
<div class="t" style="left:237.50px;top:1085.49px;font-size:16.20px;color:#aeab9a;transform:scaleX(1.0175);transform-origin:0 0;">100</div>
<div class="a" style="left:272px;top:1076px;width:19px;height:34px;background:#fdfdfb"></div>
<div class="a" style="left:274px;top:1078px;width:15px;height:30px;background:#efeee6;border-radius:2px"></div>
<svg style="left:274.0px;top:1078.0px" width="15.0" height="30.0" viewBox="0 0 15 30"><path d="M3.500 11.500 l4 -4.500 l4 4.500 M3.500 18.500 l4 4.500 l4 -4.500" fill="none" stroke="#c9c7ba" stroke-width="2"/></svg>
<div class="a" style="left:295px;top:1072px;width:2px;height:43px;background:linear-gradient(to right,#b7b4a3 50%,#fbfaf6 50%)"></div>
<svg style="left:303.0px;top:1081.0px" width="27.0" height="23.0" viewBox="0 0 27 23"><path d="M1.500 13 Q13.500 3 25.500 13 Q13.500 22.500 1.500 13 Z" fill="#c9c9c4" stroke="#2a2a2a" stroke-width="2"/><circle cx="13.500" cy="12.800" r="5.800" fill="#3a3a3a"/><circle cx="13.500" cy="12.800" r="2.800" fill="#0c0c0c"/>
<path d="M5 7.500 L3 3 M9 5.500 L7.500 0.500 M13.500 4.500 L13.500 0 M18 5.500 L19.500 0.500 M22 7.500 L24 3" stroke="#2a2a2a" stroke-width="1.900"/></svg>
<svg style="left:340.0px;top:1080.0px" width="24.0" height="26.0" viewBox="0 0 24 26"><path d="M6 12 v-4 q0 -6 6.500 -6 q6.500 0 6.500 6 v1.500" fill="none" stroke="#333" stroke-width="2"/>
<rect x="3" y="12" width="16" height="12" rx="1.500" transform="rotate(-8 11 18)" fill="#cfcfc8" stroke="#333" stroke-width="1.700"/><rect x="10" y="16" width="2.600" height="4" fill="#222" transform="rotate(-8 11 18)"/></svg>
<div class="a" style="left:369px;top:1072px;width:126px;height:43px;background:#fff;border:1.5px solid #7f9db9"></div>
<div class="a" style="left:466px;top:1075px;width:27px;height:38px;border-radius:3px;background:linear-gradient(135deg,#cdd9fb,#b4c5f3 60%,#a6b8ee);border:1px solid #c3d0f8"></div>
<svg style="left:466.0px;top:1075.0px" width="27.0" height="38.0" viewBox="0 0 27 38"><path d="M8 15.500 l5.500 6 l5.500 -6" fill="none" stroke="#4d6185" stroke-width="3.200"/></svg>
<div class="t" style="left:383.00px;top:1085.73px;font-size:14.50px;color:#000;transform:scaleX(1.0104);transform-origin:0 0;">(root)</div>
<div class="t" style="left:503.00px;top:1086.41px;font-size:17.00px;color:#000;transform:scaleX(1.0143);transform-origin:0 0;">No objects selected. Click, Shift+click, or drag around objects to select.</div>
<div class="a" style="left:1337px;top:1072px;width:2px;height:43px;background:linear-gradient(to right,#b7b4a3 50%,#fbfaf6 50%)"></div>
<div class="t" style="left:1343.50px;top:1075.03px;font-size:16.50px;color:#000;transform:scaleX(0.8980);transform-origin:0 0;">X:</div>
<div class="t" style="left:1343.50px;top:1097.53px;font-size:16.50px;color:#000;transform:scaleX(0.9537);transform-origin:0 0;">Y:</div>
<div class="t" style="left:1375.00px;top:1076.27px;font-size:16.60px;color:#000;font-family:'Liberation Mono',monospace;transform:scaleX(1.0790);transform-origin:0 0;">132.98</div>
<div class="t" style="left:1375.00px;top:1098.77px;font-size:16.60px;color:#000;font-family:'Liberation Mono',monospace;transform:scaleX(1.0790);transform-origin:0 0;">163.12</div>
<div class="t" style="left:1454.00px;top:1086.23px;font-size:16.50px;color:#000;transform:scaleX(0.9549);transform-origin:0 0;">Z:</div>
<div class="a" style="left:1473px;top:1076px;width:73px;height:34px;background:#fff;border:1.5px solid #7f9db9"></div>
<div class="t" style="left:1483.50px;top:1086.23px;font-size:16.50px;color:#000;transform:scaleX(1.0782);transform-origin:0 0;">242%</div>
<div class="a" style="left:1545px;top:1077px;width:18px;height:32px;background:linear-gradient(135deg,#cdd9fb,#b4c5f3 60%,#a6b8ee);border:1px solid #e4ebff;border-radius:2px"></div>
<svg style="left:1545.0px;top:1077.0px" width="18.0" height="32.0" viewBox="0 0 18 32"><path d="M4 12.500 l5 -5 l5 5 M4 19.500 l5 5 l5 -5" fill="none" stroke="#4d6185" stroke-width="2.800"/></svg>
<svg style="left:1574.0px;top:1094.0px" width="18.0" height="20.0" viewBox="0 0 18 20"><rect x="14" y="2" width="2.600" height="2.600" fill="#b8b5a2"/><rect x="16" y="4" width="1.300" height="1.300" fill="#fff"/><rect x="14" y="7" width="2.600" height="2.600" fill="#b8b5a2"/><rect x="16" y="9" width="1.300" height="1.300" fill="#fff"/><rect x="14" y="12" width="2.600" height="2.600" fill="#b8b5a2"/><rect x="16" y="14" width="1.300" height="1.300" fill="#fff"/><rect x="14" y="17" width="2.600" height="2.600" fill="#b8b5a2"/><rect x="16" y="19" width="1.300" height="1.300" fill="#fff"/><rect x="9" y="7" width="2.600" height="2.600" fill="#b8b5a2"/><rect x="11" y="9" width="1.300" height="1.300" fill="#fff"/><rect x="9" y="12" width="2.600" height="2.600" fill="#b8b5a2"/><rect x="11" y="14" width="1.300" height="1.300" fill="#fff"/><rect x="9" y="17" width="2.600" height="2.600" fill="#b8b5a2"/><rect x="11" y="19" width="1.300" height="1.300" fill="#fff"/><rect x="4" y="12" width="2.600" height="2.600" fill="#b8b5a2"/><rect x="6" y="14" width="1.300" height="1.300" fill="#fff"/><rect x="4" y="17" width="2.600" height="2.600" fill="#b8b5a2"/><rect x="6" y="19" width="1.300" height="1.300" fill="#fff"/><rect x="-1" y="17" width="2.600" height="2.600" fill="#b8b5a2"/><rect x="1" y="19" width="1.300" height="1.300" fill="#fff"/></svg>
</body></html>
